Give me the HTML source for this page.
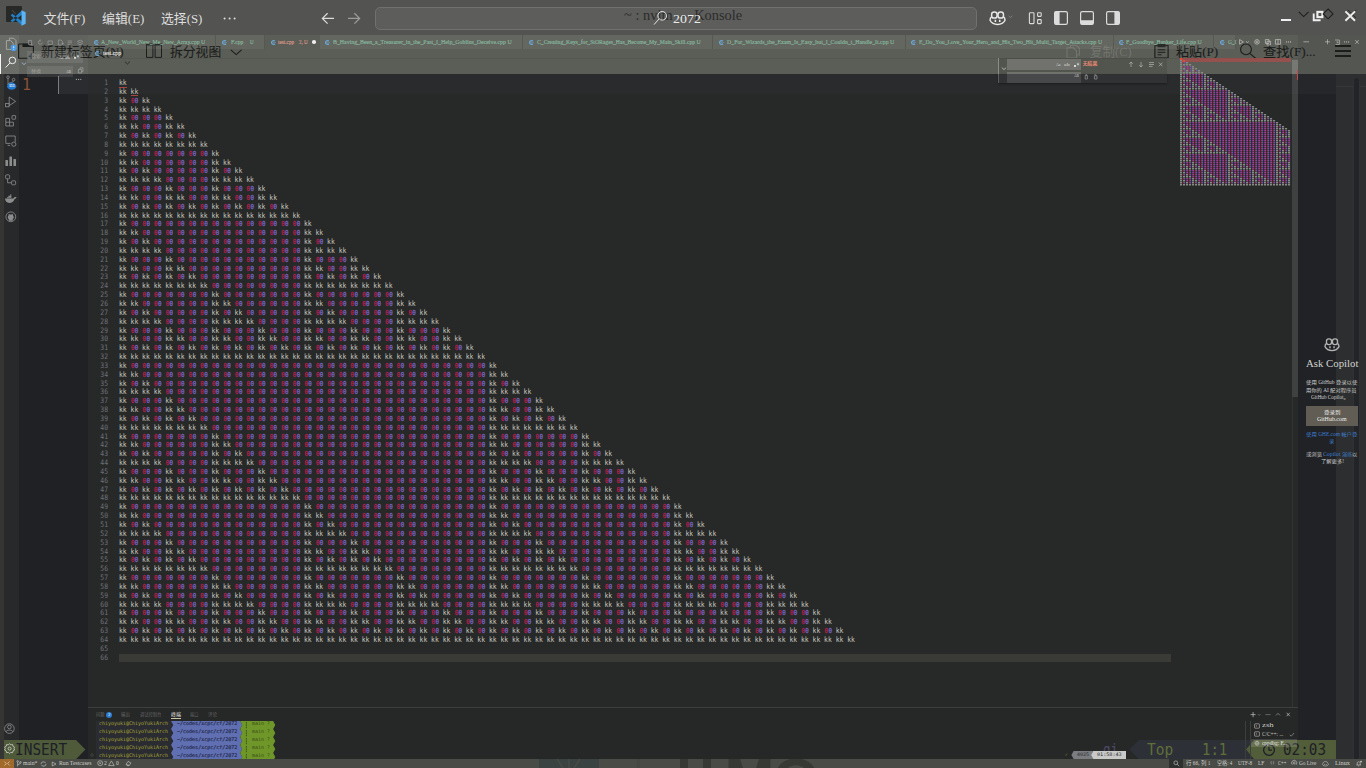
<!DOCTYPE html><html lang="zh-CN"><head><meta charset="utf-8"><title>test.cpp</title><style>
*{margin:0;padding:0;box-sizing:border-box}
html,body{width:1366px;height:768px;overflow:hidden;background:#272929}
body{position:relative;font-family:"Liberation Serif","Noto Sans CJK SC",serif}
div,span.t,svg{position:absolute}
svg{overflow:visible}
.t{white-space:pre;transform-origin:0 50%}
.fs{font-family:"Liberation Serif","Noto Sans CJK SC",serif}
.fn{font-family:"Liberation Sans","Noto Sans CJK SC",sans-serif}
.fm{font-family:"DejaVu Sans Mono","Liberation Mono","Noto Sans CJK SC",monospace}
#code,#ln{left:0;top:0;font-family:"DejaVu Sans Mono","Liberation Mono","Noto Sans CJK SC",monospace;font-size:7.5px;color:#c3c3bb;white-space:pre}
#code div{position:absolute;left:0;height:9px;line-height:9px;transform:scaleX(.8533);transform-origin:0 0}
#code i,#code b{font-style:normal;font-weight:400;font-size:6.8px;letter-spacing:.421px}#code i{margin-left:.5px;color:#bd214b;-webkit-text-stroke:.22px #bd214b}#code b{margin-right:-.5px;color:#7b6cd4;-webkit-text-stroke:.22px #7b6cd4}
#ln div{position:absolute;width:30px;text-align:right;height:9px;line-height:9px;transform:scaleX(.8533);transform-origin:100% 0;color:#6d7277}
</style></head><body>
<div style="left:0px;top:74px;width:4px;height:685px;background:#353533;"></div>
<div style="left:4px;top:74px;width:15px;height:685px;background:#27292a;"></div>
<div style="left:19px;top:74px;width:69px;height:685px;background:#1f2124;"></div>
<div style="left:1298px;top:74px;width:38px;height:685px;background:#202225;"></div>
<div style="left:1336px;top:74px;width:30px;height:685px;background:#2c2e2f;"></div>
<div style="left:58.5px;top:74px;width:29.5px;height:20px;background:#2a2c30;"></div>
<div style="left:88px;top:74px;width:1210px;height:20px;background:#292b2d;"></div>
<div style="left:1298px;top:74px;width:38px;height:20px;background:#25272a;"></div>
<div style="left:0px;top:0px;width:1366px;height:35px;background:#535351;"></div>
<div style="left:0px;top:35px;width:19px;height:39px;background:#6a6c67;"></div>
<div style="left:19px;top:35px;width:69px;height:39px;background:#61635e;"></div>
<div style="left:88px;top:35px;width:1210px;height:39px;background:#5b5d57;"></div>
<div style="left:1298px;top:35px;width:68px;height:39px;background:#545652;"></div>
<div style="left:0px;top:759px;width:1366px;height:9px;background:#494b46;"></div>
<div id="ln">
<div style="left:78px;top:78.00px">1</div>
<div style="left:78px;top:86.84px">2</div>
<div style="left:78px;top:95.68px">3</div>
<div style="left:78px;top:104.52px">4</div>
<div style="left:78px;top:113.36px">5</div>
<div style="left:78px;top:122.20px">6</div>
<div style="left:78px;top:131.04px">7</div>
<div style="left:78px;top:139.88px">8</div>
<div style="left:78px;top:148.72px">9</div>
<div style="left:78px;top:157.56px">10</div>
<div style="left:78px;top:166.40px">11</div>
<div style="left:78px;top:175.24px">12</div>
<div style="left:78px;top:184.08px">13</div>
<div style="left:78px;top:192.92px">14</div>
<div style="left:78px;top:201.76px">15</div>
<div style="left:78px;top:210.60px">16</div>
<div style="left:78px;top:219.44px">17</div>
<div style="left:78px;top:228.28px">18</div>
<div style="left:78px;top:237.12px">19</div>
<div style="left:78px;top:245.96px">20</div>
<div style="left:78px;top:254.80px">21</div>
<div style="left:78px;top:263.64px">22</div>
<div style="left:78px;top:272.48px">23</div>
<div style="left:78px;top:281.32px">24</div>
<div style="left:78px;top:290.16px">25</div>
<div style="left:78px;top:299.00px">26</div>
<div style="left:78px;top:307.84px">27</div>
<div style="left:78px;top:316.68px">28</div>
<div style="left:78px;top:325.52px">29</div>
<div style="left:78px;top:334.36px">30</div>
<div style="left:78px;top:343.20px">31</div>
<div style="left:78px;top:352.04px">32</div>
<div style="left:78px;top:360.88px">33</div>
<div style="left:78px;top:369.72px">34</div>
<div style="left:78px;top:378.56px">35</div>
<div style="left:78px;top:387.40px">36</div>
<div style="left:78px;top:396.24px">37</div>
<div style="left:78px;top:405.08px">38</div>
<div style="left:78px;top:413.92px">39</div>
<div style="left:78px;top:422.76px">40</div>
<div style="left:78px;top:431.60px">41</div>
<div style="left:78px;top:440.44px">42</div>
<div style="left:78px;top:449.28px">43</div>
<div style="left:78px;top:458.12px">44</div>
<div style="left:78px;top:466.96px">45</div>
<div style="left:78px;top:475.80px">46</div>
<div style="left:78px;top:484.64px">47</div>
<div style="left:78px;top:493.48px">48</div>
<div style="left:78px;top:502.32px">49</div>
<div style="left:78px;top:511.16px">50</div>
<div style="left:78px;top:520.00px">51</div>
<div style="left:78px;top:528.84px">52</div>
<div style="left:78px;top:537.68px">53</div>
<div style="left:78px;top:546.52px">54</div>
<div style="left:78px;top:555.36px">55</div>
<div style="left:78px;top:564.20px">56</div>
<div style="left:78px;top:573.04px">57</div>
<div style="left:78px;top:581.88px">58</div>
<div style="left:78px;top:590.72px">59</div>
<div style="left:78px;top:599.56px">60</div>
<div style="left:78px;top:608.40px">61</div>
<div style="left:78px;top:617.24px">62</div>
<div style="left:78px;top:626.08px">63</div>
<div style="left:78px;top:634.92px">64</div>
<div style="left:78px;top:643.76px">65</div>
<div style="left:78px;top:652.60px">66</div>
</div>
<div id="code">
<div style="left:118.8px;top:78.00px">kk</div>
<div style="left:118.8px;top:86.84px">kk kk</div>
<div style="left:118.8px;top:95.68px">kk <i>0</i><b>0</b> kk</div>
<div style="left:118.8px;top:104.52px">kk kk kk kk</div>
<div style="left:118.8px;top:113.36px">kk <i>0</i><b>0</b> <i>0</i><b>0</b> <i>0</i><b>0</b> kk</div>
<div style="left:118.8px;top:122.20px">kk kk <i>0</i><b>0</b> <i>0</i><b>0</b> kk kk</div>
<div style="left:118.8px;top:131.04px">kk <i>0</i><b>0</b> kk <i>0</i><b>0</b> kk <i>0</i><b>0</b> kk</div>
<div style="left:118.8px;top:139.88px">kk kk kk kk kk kk kk kk</div>
<div style="left:118.8px;top:148.72px">kk <i>0</i><b>0</b> <i>0</i><b>0</b> <i>0</i><b>0</b> <i>0</i><b>0</b> <i>0</i><b>0</b> <i>0</i><b>0</b> <i>0</i><b>0</b> kk</div>
<div style="left:118.8px;top:157.56px">kk kk <i>0</i><b>0</b> <i>0</i><b>0</b> <i>0</i><b>0</b> <i>0</i><b>0</b> <i>0</i><b>0</b> <i>0</i><b>0</b> kk kk</div>
<div style="left:118.8px;top:166.40px">kk <i>0</i><b>0</b> kk <i>0</i><b>0</b> <i>0</i><b>0</b> <i>0</i><b>0</b> <i>0</i><b>0</b> <i>0</i><b>0</b> kk <i>0</i><b>0</b> kk</div>
<div style="left:118.8px;top:175.24px">kk kk kk kk <i>0</i><b>0</b> <i>0</i><b>0</b> <i>0</i><b>0</b> <i>0</i><b>0</b> kk kk kk kk</div>
<div style="left:118.8px;top:184.08px">kk <i>0</i><b>0</b> <i>0</i><b>0</b> <i>0</i><b>0</b> kk <i>0</i><b>0</b> <i>0</i><b>0</b> <i>0</i><b>0</b> kk <i>0</i><b>0</b> <i>0</i><b>0</b> <i>0</i><b>0</b> kk</div>
<div style="left:118.8px;top:192.92px">kk kk <i>0</i><b>0</b> <i>0</i><b>0</b> kk kk <i>0</i><b>0</b> <i>0</i><b>0</b> kk kk <i>0</i><b>0</b> <i>0</i><b>0</b> kk kk</div>
<div style="left:118.8px;top:201.76px">kk <i>0</i><b>0</b> kk <i>0</i><b>0</b> kk <i>0</i><b>0</b> kk <i>0</i><b>0</b> kk <i>0</i><b>0</b> kk <i>0</i><b>0</b> kk <i>0</i><b>0</b> kk</div>
<div style="left:118.8px;top:210.60px">kk kk kk kk kk kk kk kk kk kk kk kk kk kk kk kk</div>
<div style="left:118.8px;top:219.44px">kk <i>0</i><b>0</b> <i>0</i><b>0</b> <i>0</i><b>0</b> <i>0</i><b>0</b> <i>0</i><b>0</b> <i>0</i><b>0</b> <i>0</i><b>0</b> <i>0</i><b>0</b> <i>0</i><b>0</b> <i>0</i><b>0</b> <i>0</i><b>0</b> <i>0</i><b>0</b> <i>0</i><b>0</b> <i>0</i><b>0</b> <i>0</i><b>0</b> kk</div>
<div style="left:118.8px;top:228.28px">kk kk <i>0</i><b>0</b> <i>0</i><b>0</b> <i>0</i><b>0</b> <i>0</i><b>0</b> <i>0</i><b>0</b> <i>0</i><b>0</b> <i>0</i><b>0</b> <i>0</i><b>0</b> <i>0</i><b>0</b> <i>0</i><b>0</b> <i>0</i><b>0</b> <i>0</i><b>0</b> <i>0</i><b>0</b> <i>0</i><b>0</b> kk kk</div>
<div style="left:118.8px;top:237.12px">kk <i>0</i><b>0</b> kk <i>0</i><b>0</b> <i>0</i><b>0</b> <i>0</i><b>0</b> <i>0</i><b>0</b> <i>0</i><b>0</b> <i>0</i><b>0</b> <i>0</i><b>0</b> <i>0</i><b>0</b> <i>0</i><b>0</b> <i>0</i><b>0</b> <i>0</i><b>0</b> <i>0</i><b>0</b> <i>0</i><b>0</b> kk <i>0</i><b>0</b> kk</div>
<div style="left:118.8px;top:245.96px">kk kk kk kk <i>0</i><b>0</b> <i>0</i><b>0</b> <i>0</i><b>0</b> <i>0</i><b>0</b> <i>0</i><b>0</b> <i>0</i><b>0</b> <i>0</i><b>0</b> <i>0</i><b>0</b> <i>0</i><b>0</b> <i>0</i><b>0</b> <i>0</i><b>0</b> <i>0</i><b>0</b> kk kk kk kk</div>
<div style="left:118.8px;top:254.80px">kk <i>0</i><b>0</b> <i>0</i><b>0</b> <i>0</i><b>0</b> kk <i>0</i><b>0</b> <i>0</i><b>0</b> <i>0</i><b>0</b> <i>0</i><b>0</b> <i>0</i><b>0</b> <i>0</i><b>0</b> <i>0</i><b>0</b> <i>0</i><b>0</b> <i>0</i><b>0</b> <i>0</i><b>0</b> <i>0</i><b>0</b> kk <i>0</i><b>0</b> <i>0</i><b>0</b> <i>0</i><b>0</b> kk</div>
<div style="left:118.8px;top:263.64px">kk kk <i>0</i><b>0</b> <i>0</i><b>0</b> kk kk <i>0</i><b>0</b> <i>0</i><b>0</b> <i>0</i><b>0</b> <i>0</i><b>0</b> <i>0</i><b>0</b> <i>0</i><b>0</b> <i>0</i><b>0</b> <i>0</i><b>0</b> <i>0</i><b>0</b> <i>0</i><b>0</b> kk kk <i>0</i><b>0</b> <i>0</i><b>0</b> kk kk</div>
<div style="left:118.8px;top:272.48px">kk <i>0</i><b>0</b> kk <i>0</i><b>0</b> kk <i>0</i><b>0</b> kk <i>0</i><b>0</b> <i>0</i><b>0</b> <i>0</i><b>0</b> <i>0</i><b>0</b> <i>0</i><b>0</b> <i>0</i><b>0</b> <i>0</i><b>0</b> <i>0</i><b>0</b> <i>0</i><b>0</b> kk <i>0</i><b>0</b> kk <i>0</i><b>0</b> kk <i>0</i><b>0</b> kk</div>
<div style="left:118.8px;top:281.32px">kk kk kk kk kk kk kk kk <i>0</i><b>0</b> <i>0</i><b>0</b> <i>0</i><b>0</b> <i>0</i><b>0</b> <i>0</i><b>0</b> <i>0</i><b>0</b> <i>0</i><b>0</b> <i>0</i><b>0</b> kk kk kk kk kk kk kk kk</div>
<div style="left:118.8px;top:290.16px">kk <i>0</i><b>0</b> <i>0</i><b>0</b> <i>0</i><b>0</b> <i>0</i><b>0</b> <i>0</i><b>0</b> <i>0</i><b>0</b> <i>0</i><b>0</b> kk <i>0</i><b>0</b> <i>0</i><b>0</b> <i>0</i><b>0</b> <i>0</i><b>0</b> <i>0</i><b>0</b> <i>0</i><b>0</b> <i>0</i><b>0</b> kk <i>0</i><b>0</b> <i>0</i><b>0</b> <i>0</i><b>0</b> <i>0</i><b>0</b> <i>0</i><b>0</b> <i>0</i><b>0</b> <i>0</i><b>0</b> kk</div>
<div style="left:118.8px;top:299.00px">kk kk <i>0</i><b>0</b> <i>0</i><b>0</b> <i>0</i><b>0</b> <i>0</i><b>0</b> <i>0</i><b>0</b> <i>0</i><b>0</b> kk kk <i>0</i><b>0</b> <i>0</i><b>0</b> <i>0</i><b>0</b> <i>0</i><b>0</b> <i>0</i><b>0</b> <i>0</i><b>0</b> kk kk <i>0</i><b>0</b> <i>0</i><b>0</b> <i>0</i><b>0</b> <i>0</i><b>0</b> <i>0</i><b>0</b> <i>0</i><b>0</b> kk kk</div>
<div style="left:118.8px;top:307.84px">kk <i>0</i><b>0</b> kk <i>0</i><b>0</b> <i>0</i><b>0</b> <i>0</i><b>0</b> <i>0</i><b>0</b> <i>0</i><b>0</b> kk <i>0</i><b>0</b> kk <i>0</i><b>0</b> <i>0</i><b>0</b> <i>0</i><b>0</b> <i>0</i><b>0</b> <i>0</i><b>0</b> kk <i>0</i><b>0</b> kk <i>0</i><b>0</b> <i>0</i><b>0</b> <i>0</i><b>0</b> <i>0</i><b>0</b> <i>0</i><b>0</b> kk <i>0</i><b>0</b> kk</div>
<div style="left:118.8px;top:316.68px">kk kk kk kk <i>0</i><b>0</b> <i>0</i><b>0</b> <i>0</i><b>0</b> <i>0</i><b>0</b> kk kk kk kk <i>0</i><b>0</b> <i>0</i><b>0</b> <i>0</i><b>0</b> <i>0</i><b>0</b> kk kk kk kk <i>0</i><b>0</b> <i>0</i><b>0</b> <i>0</i><b>0</b> <i>0</i><b>0</b> kk kk kk kk</div>
<div style="left:118.8px;top:325.52px">kk <i>0</i><b>0</b> <i>0</i><b>0</b> <i>0</i><b>0</b> kk <i>0</i><b>0</b> <i>0</i><b>0</b> <i>0</i><b>0</b> kk <i>0</i><b>0</b> <i>0</i><b>0</b> <i>0</i><b>0</b> kk <i>0</i><b>0</b> <i>0</i><b>0</b> <i>0</i><b>0</b> kk <i>0</i><b>0</b> <i>0</i><b>0</b> <i>0</i><b>0</b> kk <i>0</i><b>0</b> <i>0</i><b>0</b> <i>0</i><b>0</b> kk <i>0</i><b>0</b> <i>0</i><b>0</b> <i>0</i><b>0</b> kk</div>
<div style="left:118.8px;top:334.36px">kk kk <i>0</i><b>0</b> <i>0</i><b>0</b> kk kk <i>0</i><b>0</b> <i>0</i><b>0</b> kk kk <i>0</i><b>0</b> <i>0</i><b>0</b> kk kk <i>0</i><b>0</b> <i>0</i><b>0</b> kk kk <i>0</i><b>0</b> <i>0</i><b>0</b> kk kk <i>0</i><b>0</b> <i>0</i><b>0</b> kk kk <i>0</i><b>0</b> <i>0</i><b>0</b> kk kk</div>
<div style="left:118.8px;top:343.20px">kk <i>0</i><b>0</b> kk <i>0</i><b>0</b> kk <i>0</i><b>0</b> kk <i>0</i><b>0</b> kk <i>0</i><b>0</b> kk <i>0</i><b>0</b> kk <i>0</i><b>0</b> kk <i>0</i><b>0</b> kk <i>0</i><b>0</b> kk <i>0</i><b>0</b> kk <i>0</i><b>0</b> kk <i>0</i><b>0</b> kk <i>0</i><b>0</b> kk <i>0</i><b>0</b> kk <i>0</i><b>0</b> kk</div>
<div style="left:118.8px;top:352.04px">kk kk kk kk kk kk kk kk kk kk kk kk kk kk kk kk kk kk kk kk kk kk kk kk kk kk kk kk kk kk kk kk</div>
<div style="left:118.8px;top:360.88px">kk <i>0</i><b>0</b> <i>0</i><b>0</b> <i>0</i><b>0</b> <i>0</i><b>0</b> <i>0</i><b>0</b> <i>0</i><b>0</b> <i>0</i><b>0</b> <i>0</i><b>0</b> <i>0</i><b>0</b> <i>0</i><b>0</b> <i>0</i><b>0</b> <i>0</i><b>0</b> <i>0</i><b>0</b> <i>0</i><b>0</b> <i>0</i><b>0</b> <i>0</i><b>0</b> <i>0</i><b>0</b> <i>0</i><b>0</b> <i>0</i><b>0</b> <i>0</i><b>0</b> <i>0</i><b>0</b> <i>0</i><b>0</b> <i>0</i><b>0</b> <i>0</i><b>0</b> <i>0</i><b>0</b> <i>0</i><b>0</b> <i>0</i><b>0</b> <i>0</i><b>0</b> <i>0</i><b>0</b> <i>0</i><b>0</b> <i>0</i><b>0</b> kk</div>
<div style="left:118.8px;top:369.72px">kk kk <i>0</i><b>0</b> <i>0</i><b>0</b> <i>0</i><b>0</b> <i>0</i><b>0</b> <i>0</i><b>0</b> <i>0</i><b>0</b> <i>0</i><b>0</b> <i>0</i><b>0</b> <i>0</i><b>0</b> <i>0</i><b>0</b> <i>0</i><b>0</b> <i>0</i><b>0</b> <i>0</i><b>0</b> <i>0</i><b>0</b> <i>0</i><b>0</b> <i>0</i><b>0</b> <i>0</i><b>0</b> <i>0</i><b>0</b> <i>0</i><b>0</b> <i>0</i><b>0</b> <i>0</i><b>0</b> <i>0</i><b>0</b> <i>0</i><b>0</b> <i>0</i><b>0</b> <i>0</i><b>0</b> <i>0</i><b>0</b> <i>0</i><b>0</b> <i>0</i><b>0</b> <i>0</i><b>0</b> <i>0</i><b>0</b> kk kk</div>
<div style="left:118.8px;top:378.56px">kk <i>0</i><b>0</b> kk <i>0</i><b>0</b> <i>0</i><b>0</b> <i>0</i><b>0</b> <i>0</i><b>0</b> <i>0</i><b>0</b> <i>0</i><b>0</b> <i>0</i><b>0</b> <i>0</i><b>0</b> <i>0</i><b>0</b> <i>0</i><b>0</b> <i>0</i><b>0</b> <i>0</i><b>0</b> <i>0</i><b>0</b> <i>0</i><b>0</b> <i>0</i><b>0</b> <i>0</i><b>0</b> <i>0</i><b>0</b> <i>0</i><b>0</b> <i>0</i><b>0</b> <i>0</i><b>0</b> <i>0</i><b>0</b> <i>0</i><b>0</b> <i>0</i><b>0</b> <i>0</i><b>0</b> <i>0</i><b>0</b> <i>0</i><b>0</b> <i>0</i><b>0</b> <i>0</i><b>0</b> <i>0</i><b>0</b> kk <i>0</i><b>0</b> kk</div>
<div style="left:118.8px;top:387.40px">kk kk kk kk <i>0</i><b>0</b> <i>0</i><b>0</b> <i>0</i><b>0</b> <i>0</i><b>0</b> <i>0</i><b>0</b> <i>0</i><b>0</b> <i>0</i><b>0</b> <i>0</i><b>0</b> <i>0</i><b>0</b> <i>0</i><b>0</b> <i>0</i><b>0</b> <i>0</i><b>0</b> <i>0</i><b>0</b> <i>0</i><b>0</b> <i>0</i><b>0</b> <i>0</i><b>0</b> <i>0</i><b>0</b> <i>0</i><b>0</b> <i>0</i><b>0</b> <i>0</i><b>0</b> <i>0</i><b>0</b> <i>0</i><b>0</b> <i>0</i><b>0</b> <i>0</i><b>0</b> <i>0</i><b>0</b> <i>0</i><b>0</b> <i>0</i><b>0</b> <i>0</i><b>0</b> kk kk kk kk</div>
<div style="left:118.8px;top:396.24px">kk <i>0</i><b>0</b> <i>0</i><b>0</b> <i>0</i><b>0</b> kk <i>0</i><b>0</b> <i>0</i><b>0</b> <i>0</i><b>0</b> <i>0</i><b>0</b> <i>0</i><b>0</b> <i>0</i><b>0</b> <i>0</i><b>0</b> <i>0</i><b>0</b> <i>0</i><b>0</b> <i>0</i><b>0</b> <i>0</i><b>0</b> <i>0</i><b>0</b> <i>0</i><b>0</b> <i>0</i><b>0</b> <i>0</i><b>0</b> <i>0</i><b>0</b> <i>0</i><b>0</b> <i>0</i><b>0</b> <i>0</i><b>0</b> <i>0</i><b>0</b> <i>0</i><b>0</b> <i>0</i><b>0</b> <i>0</i><b>0</b> <i>0</i><b>0</b> <i>0</i><b>0</b> <i>0</i><b>0</b> <i>0</i><b>0</b> kk <i>0</i><b>0</b> <i>0</i><b>0</b> <i>0</i><b>0</b> kk</div>
<div style="left:118.8px;top:405.08px">kk kk <i>0</i><b>0</b> <i>0</i><b>0</b> kk kk <i>0</i><b>0</b> <i>0</i><b>0</b> <i>0</i><b>0</b> <i>0</i><b>0</b> <i>0</i><b>0</b> <i>0</i><b>0</b> <i>0</i><b>0</b> <i>0</i><b>0</b> <i>0</i><b>0</b> <i>0</i><b>0</b> <i>0</i><b>0</b> <i>0</i><b>0</b> <i>0</i><b>0</b> <i>0</i><b>0</b> <i>0</i><b>0</b> <i>0</i><b>0</b> <i>0</i><b>0</b> <i>0</i><b>0</b> <i>0</i><b>0</b> <i>0</i><b>0</b> <i>0</i><b>0</b> <i>0</i><b>0</b> <i>0</i><b>0</b> <i>0</i><b>0</b> <i>0</i><b>0</b> <i>0</i><b>0</b> kk kk <i>0</i><b>0</b> <i>0</i><b>0</b> kk kk</div>
<div style="left:118.8px;top:413.92px">kk <i>0</i><b>0</b> kk <i>0</i><b>0</b> kk <i>0</i><b>0</b> kk <i>0</i><b>0</b> <i>0</i><b>0</b> <i>0</i><b>0</b> <i>0</i><b>0</b> <i>0</i><b>0</b> <i>0</i><b>0</b> <i>0</i><b>0</b> <i>0</i><b>0</b> <i>0</i><b>0</b> <i>0</i><b>0</b> <i>0</i><b>0</b> <i>0</i><b>0</b> <i>0</i><b>0</b> <i>0</i><b>0</b> <i>0</i><b>0</b> <i>0</i><b>0</b> <i>0</i><b>0</b> <i>0</i><b>0</b> <i>0</i><b>0</b> <i>0</i><b>0</b> <i>0</i><b>0</b> <i>0</i><b>0</b> <i>0</i><b>0</b> <i>0</i><b>0</b> <i>0</i><b>0</b> kk <i>0</i><b>0</b> kk <i>0</i><b>0</b> kk <i>0</i><b>0</b> kk</div>
<div style="left:118.8px;top:422.76px">kk kk kk kk kk kk kk kk <i>0</i><b>0</b> <i>0</i><b>0</b> <i>0</i><b>0</b> <i>0</i><b>0</b> <i>0</i><b>0</b> <i>0</i><b>0</b> <i>0</i><b>0</b> <i>0</i><b>0</b> <i>0</i><b>0</b> <i>0</i><b>0</b> <i>0</i><b>0</b> <i>0</i><b>0</b> <i>0</i><b>0</b> <i>0</i><b>0</b> <i>0</i><b>0</b> <i>0</i><b>0</b> <i>0</i><b>0</b> <i>0</i><b>0</b> <i>0</i><b>0</b> <i>0</i><b>0</b> <i>0</i><b>0</b> <i>0</i><b>0</b> <i>0</i><b>0</b> <i>0</i><b>0</b> kk kk kk kk kk kk kk kk</div>
<div style="left:118.8px;top:431.60px">kk <i>0</i><b>0</b> <i>0</i><b>0</b> <i>0</i><b>0</b> <i>0</i><b>0</b> <i>0</i><b>0</b> <i>0</i><b>0</b> <i>0</i><b>0</b> kk <i>0</i><b>0</b> <i>0</i><b>0</b> <i>0</i><b>0</b> <i>0</i><b>0</b> <i>0</i><b>0</b> <i>0</i><b>0</b> <i>0</i><b>0</b> <i>0</i><b>0</b> <i>0</i><b>0</b> <i>0</i><b>0</b> <i>0</i><b>0</b> <i>0</i><b>0</b> <i>0</i><b>0</b> <i>0</i><b>0</b> <i>0</i><b>0</b> <i>0</i><b>0</b> <i>0</i><b>0</b> <i>0</i><b>0</b> <i>0</i><b>0</b> <i>0</i><b>0</b> <i>0</i><b>0</b> <i>0</i><b>0</b> <i>0</i><b>0</b> kk <i>0</i><b>0</b> <i>0</i><b>0</b> <i>0</i><b>0</b> <i>0</i><b>0</b> <i>0</i><b>0</b> <i>0</i><b>0</b> <i>0</i><b>0</b> kk</div>
<div style="left:118.8px;top:440.44px">kk kk <i>0</i><b>0</b> <i>0</i><b>0</b> <i>0</i><b>0</b> <i>0</i><b>0</b> <i>0</i><b>0</b> <i>0</i><b>0</b> kk kk <i>0</i><b>0</b> <i>0</i><b>0</b> <i>0</i><b>0</b> <i>0</i><b>0</b> <i>0</i><b>0</b> <i>0</i><b>0</b> <i>0</i><b>0</b> <i>0</i><b>0</b> <i>0</i><b>0</b> <i>0</i><b>0</b> <i>0</i><b>0</b> <i>0</i><b>0</b> <i>0</i><b>0</b> <i>0</i><b>0</b> <i>0</i><b>0</b> <i>0</i><b>0</b> <i>0</i><b>0</b> <i>0</i><b>0</b> <i>0</i><b>0</b> <i>0</i><b>0</b> <i>0</i><b>0</b> <i>0</i><b>0</b> kk kk <i>0</i><b>0</b> <i>0</i><b>0</b> <i>0</i><b>0</b> <i>0</i><b>0</b> <i>0</i><b>0</b> <i>0</i><b>0</b> kk kk</div>
<div style="left:118.8px;top:449.28px">kk <i>0</i><b>0</b> kk <i>0</i><b>0</b> <i>0</i><b>0</b> <i>0</i><b>0</b> <i>0</i><b>0</b> <i>0</i><b>0</b> kk <i>0</i><b>0</b> kk <i>0</i><b>0</b> <i>0</i><b>0</b> <i>0</i><b>0</b> <i>0</i><b>0</b> <i>0</i><b>0</b> <i>0</i><b>0</b> <i>0</i><b>0</b> <i>0</i><b>0</b> <i>0</i><b>0</b> <i>0</i><b>0</b> <i>0</i><b>0</b> <i>0</i><b>0</b> <i>0</i><b>0</b> <i>0</i><b>0</b> <i>0</i><b>0</b> <i>0</i><b>0</b> <i>0</i><b>0</b> <i>0</i><b>0</b> <i>0</i><b>0</b> <i>0</i><b>0</b> <i>0</i><b>0</b> kk <i>0</i><b>0</b> kk <i>0</i><b>0</b> <i>0</i><b>0</b> <i>0</i><b>0</b> <i>0</i><b>0</b> <i>0</i><b>0</b> kk <i>0</i><b>0</b> kk</div>
<div style="left:118.8px;top:458.12px">kk kk kk kk <i>0</i><b>0</b> <i>0</i><b>0</b> <i>0</i><b>0</b> <i>0</i><b>0</b> kk kk kk kk <i>0</i><b>0</b> <i>0</i><b>0</b> <i>0</i><b>0</b> <i>0</i><b>0</b> <i>0</i><b>0</b> <i>0</i><b>0</b> <i>0</i><b>0</b> <i>0</i><b>0</b> <i>0</i><b>0</b> <i>0</i><b>0</b> <i>0</i><b>0</b> <i>0</i><b>0</b> <i>0</i><b>0</b> <i>0</i><b>0</b> <i>0</i><b>0</b> <i>0</i><b>0</b> <i>0</i><b>0</b> <i>0</i><b>0</b> <i>0</i><b>0</b> <i>0</i><b>0</b> kk kk kk kk <i>0</i><b>0</b> <i>0</i><b>0</b> <i>0</i><b>0</b> <i>0</i><b>0</b> kk kk kk kk</div>
<div style="left:118.8px;top:466.96px">kk <i>0</i><b>0</b> <i>0</i><b>0</b> <i>0</i><b>0</b> kk <i>0</i><b>0</b> <i>0</i><b>0</b> <i>0</i><b>0</b> kk <i>0</i><b>0</b> <i>0</i><b>0</b> <i>0</i><b>0</b> kk <i>0</i><b>0</b> <i>0</i><b>0</b> <i>0</i><b>0</b> <i>0</i><b>0</b> <i>0</i><b>0</b> <i>0</i><b>0</b> <i>0</i><b>0</b> <i>0</i><b>0</b> <i>0</i><b>0</b> <i>0</i><b>0</b> <i>0</i><b>0</b> <i>0</i><b>0</b> <i>0</i><b>0</b> <i>0</i><b>0</b> <i>0</i><b>0</b> <i>0</i><b>0</b> <i>0</i><b>0</b> <i>0</i><b>0</b> <i>0</i><b>0</b> kk <i>0</i><b>0</b> <i>0</i><b>0</b> <i>0</i><b>0</b> kk <i>0</i><b>0</b> <i>0</i><b>0</b> <i>0</i><b>0</b> kk <i>0</i><b>0</b> <i>0</i><b>0</b> <i>0</i><b>0</b> kk</div>
<div style="left:118.8px;top:475.80px">kk kk <i>0</i><b>0</b> <i>0</i><b>0</b> kk kk <i>0</i><b>0</b> <i>0</i><b>0</b> kk kk <i>0</i><b>0</b> <i>0</i><b>0</b> kk kk <i>0</i><b>0</b> <i>0</i><b>0</b> <i>0</i><b>0</b> <i>0</i><b>0</b> <i>0</i><b>0</b> <i>0</i><b>0</b> <i>0</i><b>0</b> <i>0</i><b>0</b> <i>0</i><b>0</b> <i>0</i><b>0</b> <i>0</i><b>0</b> <i>0</i><b>0</b> <i>0</i><b>0</b> <i>0</i><b>0</b> <i>0</i><b>0</b> <i>0</i><b>0</b> <i>0</i><b>0</b> <i>0</i><b>0</b> kk kk <i>0</i><b>0</b> <i>0</i><b>0</b> kk kk <i>0</i><b>0</b> <i>0</i><b>0</b> kk kk <i>0</i><b>0</b> <i>0</i><b>0</b> kk kk</div>
<div style="left:118.8px;top:484.64px">kk <i>0</i><b>0</b> kk <i>0</i><b>0</b> kk <i>0</i><b>0</b> kk <i>0</i><b>0</b> kk <i>0</i><b>0</b> kk <i>0</i><b>0</b> kk <i>0</i><b>0</b> kk <i>0</i><b>0</b> <i>0</i><b>0</b> <i>0</i><b>0</b> <i>0</i><b>0</b> <i>0</i><b>0</b> <i>0</i><b>0</b> <i>0</i><b>0</b> <i>0</i><b>0</b> <i>0</i><b>0</b> <i>0</i><b>0</b> <i>0</i><b>0</b> <i>0</i><b>0</b> <i>0</i><b>0</b> <i>0</i><b>0</b> <i>0</i><b>0</b> <i>0</i><b>0</b> <i>0</i><b>0</b> kk <i>0</i><b>0</b> kk <i>0</i><b>0</b> kk <i>0</i><b>0</b> kk <i>0</i><b>0</b> kk <i>0</i><b>0</b> kk <i>0</i><b>0</b> kk <i>0</i><b>0</b> kk</div>
<div style="left:118.8px;top:493.48px">kk kk kk kk kk kk kk kk kk kk kk kk kk kk kk kk <i>0</i><b>0</b> <i>0</i><b>0</b> <i>0</i><b>0</b> <i>0</i><b>0</b> <i>0</i><b>0</b> <i>0</i><b>0</b> <i>0</i><b>0</b> <i>0</i><b>0</b> <i>0</i><b>0</b> <i>0</i><b>0</b> <i>0</i><b>0</b> <i>0</i><b>0</b> <i>0</i><b>0</b> <i>0</i><b>0</b> <i>0</i><b>0</b> <i>0</i><b>0</b> kk kk kk kk kk kk kk kk kk kk kk kk kk kk kk kk</div>
<div style="left:118.8px;top:502.32px">kk <i>0</i><b>0</b> <i>0</i><b>0</b> <i>0</i><b>0</b> <i>0</i><b>0</b> <i>0</i><b>0</b> <i>0</i><b>0</b> <i>0</i><b>0</b> <i>0</i><b>0</b> <i>0</i><b>0</b> <i>0</i><b>0</b> <i>0</i><b>0</b> <i>0</i><b>0</b> <i>0</i><b>0</b> <i>0</i><b>0</b> <i>0</i><b>0</b> kk <i>0</i><b>0</b> <i>0</i><b>0</b> <i>0</i><b>0</b> <i>0</i><b>0</b> <i>0</i><b>0</b> <i>0</i><b>0</b> <i>0</i><b>0</b> <i>0</i><b>0</b> <i>0</i><b>0</b> <i>0</i><b>0</b> <i>0</i><b>0</b> <i>0</i><b>0</b> <i>0</i><b>0</b> <i>0</i><b>0</b> <i>0</i><b>0</b> kk <i>0</i><b>0</b> <i>0</i><b>0</b> <i>0</i><b>0</b> <i>0</i><b>0</b> <i>0</i><b>0</b> <i>0</i><b>0</b> <i>0</i><b>0</b> <i>0</i><b>0</b> <i>0</i><b>0</b> <i>0</i><b>0</b> <i>0</i><b>0</b> <i>0</i><b>0</b> <i>0</i><b>0</b> <i>0</i><b>0</b> <i>0</i><b>0</b> kk</div>
<div style="left:118.8px;top:511.16px">kk kk <i>0</i><b>0</b> <i>0</i><b>0</b> <i>0</i><b>0</b> <i>0</i><b>0</b> <i>0</i><b>0</b> <i>0</i><b>0</b> <i>0</i><b>0</b> <i>0</i><b>0</b> <i>0</i><b>0</b> <i>0</i><b>0</b> <i>0</i><b>0</b> <i>0</i><b>0</b> <i>0</i><b>0</b> <i>0</i><b>0</b> kk kk <i>0</i><b>0</b> <i>0</i><b>0</b> <i>0</i><b>0</b> <i>0</i><b>0</b> <i>0</i><b>0</b> <i>0</i><b>0</b> <i>0</i><b>0</b> <i>0</i><b>0</b> <i>0</i><b>0</b> <i>0</i><b>0</b> <i>0</i><b>0</b> <i>0</i><b>0</b> <i>0</i><b>0</b> <i>0</i><b>0</b> kk kk <i>0</i><b>0</b> <i>0</i><b>0</b> <i>0</i><b>0</b> <i>0</i><b>0</b> <i>0</i><b>0</b> <i>0</i><b>0</b> <i>0</i><b>0</b> <i>0</i><b>0</b> <i>0</i><b>0</b> <i>0</i><b>0</b> <i>0</i><b>0</b> <i>0</i><b>0</b> <i>0</i><b>0</b> <i>0</i><b>0</b> kk kk</div>
<div style="left:118.8px;top:520.00px">kk <i>0</i><b>0</b> kk <i>0</i><b>0</b> <i>0</i><b>0</b> <i>0</i><b>0</b> <i>0</i><b>0</b> <i>0</i><b>0</b> <i>0</i><b>0</b> <i>0</i><b>0</b> <i>0</i><b>0</b> <i>0</i><b>0</b> <i>0</i><b>0</b> <i>0</i><b>0</b> <i>0</i><b>0</b> <i>0</i><b>0</b> kk <i>0</i><b>0</b> kk <i>0</i><b>0</b> <i>0</i><b>0</b> <i>0</i><b>0</b> <i>0</i><b>0</b> <i>0</i><b>0</b> <i>0</i><b>0</b> <i>0</i><b>0</b> <i>0</i><b>0</b> <i>0</i><b>0</b> <i>0</i><b>0</b> <i>0</i><b>0</b> <i>0</i><b>0</b> <i>0</i><b>0</b> kk <i>0</i><b>0</b> kk <i>0</i><b>0</b> <i>0</i><b>0</b> <i>0</i><b>0</b> <i>0</i><b>0</b> <i>0</i><b>0</b> <i>0</i><b>0</b> <i>0</i><b>0</b> <i>0</i><b>0</b> <i>0</i><b>0</b> <i>0</i><b>0</b> <i>0</i><b>0</b> <i>0</i><b>0</b> <i>0</i><b>0</b> kk <i>0</i><b>0</b> kk</div>
<div style="left:118.8px;top:528.84px">kk kk kk kk <i>0</i><b>0</b> <i>0</i><b>0</b> <i>0</i><b>0</b> <i>0</i><b>0</b> <i>0</i><b>0</b> <i>0</i><b>0</b> <i>0</i><b>0</b> <i>0</i><b>0</b> <i>0</i><b>0</b> <i>0</i><b>0</b> <i>0</i><b>0</b> <i>0</i><b>0</b> kk kk kk kk <i>0</i><b>0</b> <i>0</i><b>0</b> <i>0</i><b>0</b> <i>0</i><b>0</b> <i>0</i><b>0</b> <i>0</i><b>0</b> <i>0</i><b>0</b> <i>0</i><b>0</b> <i>0</i><b>0</b> <i>0</i><b>0</b> <i>0</i><b>0</b> <i>0</i><b>0</b> kk kk kk kk <i>0</i><b>0</b> <i>0</i><b>0</b> <i>0</i><b>0</b> <i>0</i><b>0</b> <i>0</i><b>0</b> <i>0</i><b>0</b> <i>0</i><b>0</b> <i>0</i><b>0</b> <i>0</i><b>0</b> <i>0</i><b>0</b> <i>0</i><b>0</b> <i>0</i><b>0</b> kk kk kk kk</div>
<div style="left:118.8px;top:537.68px">kk <i>0</i><b>0</b> <i>0</i><b>0</b> <i>0</i><b>0</b> kk <i>0</i><b>0</b> <i>0</i><b>0</b> <i>0</i><b>0</b> <i>0</i><b>0</b> <i>0</i><b>0</b> <i>0</i><b>0</b> <i>0</i><b>0</b> <i>0</i><b>0</b> <i>0</i><b>0</b> <i>0</i><b>0</b> <i>0</i><b>0</b> kk <i>0</i><b>0</b> <i>0</i><b>0</b> <i>0</i><b>0</b> kk <i>0</i><b>0</b> <i>0</i><b>0</b> <i>0</i><b>0</b> <i>0</i><b>0</b> <i>0</i><b>0</b> <i>0</i><b>0</b> <i>0</i><b>0</b> <i>0</i><b>0</b> <i>0</i><b>0</b> <i>0</i><b>0</b> <i>0</i><b>0</b> kk <i>0</i><b>0</b> <i>0</i><b>0</b> <i>0</i><b>0</b> kk <i>0</i><b>0</b> <i>0</i><b>0</b> <i>0</i><b>0</b> <i>0</i><b>0</b> <i>0</i><b>0</b> <i>0</i><b>0</b> <i>0</i><b>0</b> <i>0</i><b>0</b> <i>0</i><b>0</b> <i>0</i><b>0</b> <i>0</i><b>0</b> kk <i>0</i><b>0</b> <i>0</i><b>0</b> <i>0</i><b>0</b> kk</div>
<div style="left:118.8px;top:546.52px">kk kk <i>0</i><b>0</b> <i>0</i><b>0</b> kk kk <i>0</i><b>0</b> <i>0</i><b>0</b> <i>0</i><b>0</b> <i>0</i><b>0</b> <i>0</i><b>0</b> <i>0</i><b>0</b> <i>0</i><b>0</b> <i>0</i><b>0</b> <i>0</i><b>0</b> <i>0</i><b>0</b> kk kk <i>0</i><b>0</b> <i>0</i><b>0</b> kk kk <i>0</i><b>0</b> <i>0</i><b>0</b> <i>0</i><b>0</b> <i>0</i><b>0</b> <i>0</i><b>0</b> <i>0</i><b>0</b> <i>0</i><b>0</b> <i>0</i><b>0</b> <i>0</i><b>0</b> <i>0</i><b>0</b> kk kk <i>0</i><b>0</b> <i>0</i><b>0</b> kk kk <i>0</i><b>0</b> <i>0</i><b>0</b> <i>0</i><b>0</b> <i>0</i><b>0</b> <i>0</i><b>0</b> <i>0</i><b>0</b> <i>0</i><b>0</b> <i>0</i><b>0</b> <i>0</i><b>0</b> <i>0</i><b>0</b> kk kk <i>0</i><b>0</b> <i>0</i><b>0</b> kk kk</div>
<div style="left:118.8px;top:555.36px">kk <i>0</i><b>0</b> kk <i>0</i><b>0</b> kk <i>0</i><b>0</b> kk <i>0</i><b>0</b> <i>0</i><b>0</b> <i>0</i><b>0</b> <i>0</i><b>0</b> <i>0</i><b>0</b> <i>0</i><b>0</b> <i>0</i><b>0</b> <i>0</i><b>0</b> <i>0</i><b>0</b> kk <i>0</i><b>0</b> kk <i>0</i><b>0</b> kk <i>0</i><b>0</b> kk <i>0</i><b>0</b> <i>0</i><b>0</b> <i>0</i><b>0</b> <i>0</i><b>0</b> <i>0</i><b>0</b> <i>0</i><b>0</b> <i>0</i><b>0</b> <i>0</i><b>0</b> <i>0</i><b>0</b> kk <i>0</i><b>0</b> kk <i>0</i><b>0</b> kk <i>0</i><b>0</b> kk <i>0</i><b>0</b> <i>0</i><b>0</b> <i>0</i><b>0</b> <i>0</i><b>0</b> <i>0</i><b>0</b> <i>0</i><b>0</b> <i>0</i><b>0</b> <i>0</i><b>0</b> <i>0</i><b>0</b> kk <i>0</i><b>0</b> kk <i>0</i><b>0</b> kk <i>0</i><b>0</b> kk</div>
<div style="left:118.8px;top:564.20px">kk kk kk kk kk kk kk kk <i>0</i><b>0</b> <i>0</i><b>0</b> <i>0</i><b>0</b> <i>0</i><b>0</b> <i>0</i><b>0</b> <i>0</i><b>0</b> <i>0</i><b>0</b> <i>0</i><b>0</b> kk kk kk kk kk kk kk kk <i>0</i><b>0</b> <i>0</i><b>0</b> <i>0</i><b>0</b> <i>0</i><b>0</b> <i>0</i><b>0</b> <i>0</i><b>0</b> <i>0</i><b>0</b> <i>0</i><b>0</b> kk kk kk kk kk kk kk kk <i>0</i><b>0</b> <i>0</i><b>0</b> <i>0</i><b>0</b> <i>0</i><b>0</b> <i>0</i><b>0</b> <i>0</i><b>0</b> <i>0</i><b>0</b> <i>0</i><b>0</b> kk kk kk kk kk kk kk kk</div>
<div style="left:118.8px;top:573.04px">kk <i>0</i><b>0</b> <i>0</i><b>0</b> <i>0</i><b>0</b> <i>0</i><b>0</b> <i>0</i><b>0</b> <i>0</i><b>0</b> <i>0</i><b>0</b> kk <i>0</i><b>0</b> <i>0</i><b>0</b> <i>0</i><b>0</b> <i>0</i><b>0</b> <i>0</i><b>0</b> <i>0</i><b>0</b> <i>0</i><b>0</b> kk <i>0</i><b>0</b> <i>0</i><b>0</b> <i>0</i><b>0</b> <i>0</i><b>0</b> <i>0</i><b>0</b> <i>0</i><b>0</b> <i>0</i><b>0</b> kk <i>0</i><b>0</b> <i>0</i><b>0</b> <i>0</i><b>0</b> <i>0</i><b>0</b> <i>0</i><b>0</b> <i>0</i><b>0</b> <i>0</i><b>0</b> kk <i>0</i><b>0</b> <i>0</i><b>0</b> <i>0</i><b>0</b> <i>0</i><b>0</b> <i>0</i><b>0</b> <i>0</i><b>0</b> <i>0</i><b>0</b> kk <i>0</i><b>0</b> <i>0</i><b>0</b> <i>0</i><b>0</b> <i>0</i><b>0</b> <i>0</i><b>0</b> <i>0</i><b>0</b> <i>0</i><b>0</b> kk <i>0</i><b>0</b> <i>0</i><b>0</b> <i>0</i><b>0</b> <i>0</i><b>0</b> <i>0</i><b>0</b> <i>0</i><b>0</b> <i>0</i><b>0</b> kk</div>
<div style="left:118.8px;top:581.88px">kk kk <i>0</i><b>0</b> <i>0</i><b>0</b> <i>0</i><b>0</b> <i>0</i><b>0</b> <i>0</i><b>0</b> <i>0</i><b>0</b> kk kk <i>0</i><b>0</b> <i>0</i><b>0</b> <i>0</i><b>0</b> <i>0</i><b>0</b> <i>0</i><b>0</b> <i>0</i><b>0</b> kk kk <i>0</i><b>0</b> <i>0</i><b>0</b> <i>0</i><b>0</b> <i>0</i><b>0</b> <i>0</i><b>0</b> <i>0</i><b>0</b> kk kk <i>0</i><b>0</b> <i>0</i><b>0</b> <i>0</i><b>0</b> <i>0</i><b>0</b> <i>0</i><b>0</b> <i>0</i><b>0</b> kk kk <i>0</i><b>0</b> <i>0</i><b>0</b> <i>0</i><b>0</b> <i>0</i><b>0</b> <i>0</i><b>0</b> <i>0</i><b>0</b> kk kk <i>0</i><b>0</b> <i>0</i><b>0</b> <i>0</i><b>0</b> <i>0</i><b>0</b> <i>0</i><b>0</b> <i>0</i><b>0</b> kk kk <i>0</i><b>0</b> <i>0</i><b>0</b> <i>0</i><b>0</b> <i>0</i><b>0</b> <i>0</i><b>0</b> <i>0</i><b>0</b> kk kk</div>
<div style="left:118.8px;top:590.72px">kk <i>0</i><b>0</b> kk <i>0</i><b>0</b> <i>0</i><b>0</b> <i>0</i><b>0</b> <i>0</i><b>0</b> <i>0</i><b>0</b> kk <i>0</i><b>0</b> kk <i>0</i><b>0</b> <i>0</i><b>0</b> <i>0</i><b>0</b> <i>0</i><b>0</b> <i>0</i><b>0</b> kk <i>0</i><b>0</b> kk <i>0</i><b>0</b> <i>0</i><b>0</b> <i>0</i><b>0</b> <i>0</i><b>0</b> <i>0</i><b>0</b> kk <i>0</i><b>0</b> kk <i>0</i><b>0</b> <i>0</i><b>0</b> <i>0</i><b>0</b> <i>0</i><b>0</b> <i>0</i><b>0</b> kk <i>0</i><b>0</b> kk <i>0</i><b>0</b> <i>0</i><b>0</b> <i>0</i><b>0</b> <i>0</i><b>0</b> <i>0</i><b>0</b> kk <i>0</i><b>0</b> kk <i>0</i><b>0</b> <i>0</i><b>0</b> <i>0</i><b>0</b> <i>0</i><b>0</b> <i>0</i><b>0</b> kk <i>0</i><b>0</b> kk <i>0</i><b>0</b> <i>0</i><b>0</b> <i>0</i><b>0</b> <i>0</i><b>0</b> <i>0</i><b>0</b> kk <i>0</i><b>0</b> kk</div>
<div style="left:118.8px;top:599.56px">kk kk kk kk <i>0</i><b>0</b> <i>0</i><b>0</b> <i>0</i><b>0</b> <i>0</i><b>0</b> kk kk kk kk <i>0</i><b>0</b> <i>0</i><b>0</b> <i>0</i><b>0</b> <i>0</i><b>0</b> kk kk kk kk <i>0</i><b>0</b> <i>0</i><b>0</b> <i>0</i><b>0</b> <i>0</i><b>0</b> kk kk kk kk <i>0</i><b>0</b> <i>0</i><b>0</b> <i>0</i><b>0</b> <i>0</i><b>0</b> kk kk kk kk <i>0</i><b>0</b> <i>0</i><b>0</b> <i>0</i><b>0</b> <i>0</i><b>0</b> kk kk kk kk <i>0</i><b>0</b> <i>0</i><b>0</b> <i>0</i><b>0</b> <i>0</i><b>0</b> kk kk kk kk <i>0</i><b>0</b> <i>0</i><b>0</b> <i>0</i><b>0</b> <i>0</i><b>0</b> kk kk kk kk</div>
<div style="left:118.8px;top:608.40px">kk <i>0</i><b>0</b> <i>0</i><b>0</b> <i>0</i><b>0</b> kk <i>0</i><b>0</b> <i>0</i><b>0</b> <i>0</i><b>0</b> kk <i>0</i><b>0</b> <i>0</i><b>0</b> <i>0</i><b>0</b> kk <i>0</i><b>0</b> <i>0</i><b>0</b> <i>0</i><b>0</b> kk <i>0</i><b>0</b> <i>0</i><b>0</b> <i>0</i><b>0</b> kk <i>0</i><b>0</b> <i>0</i><b>0</b> <i>0</i><b>0</b> kk <i>0</i><b>0</b> <i>0</i><b>0</b> <i>0</i><b>0</b> kk <i>0</i><b>0</b> <i>0</i><b>0</b> <i>0</i><b>0</b> kk <i>0</i><b>0</b> <i>0</i><b>0</b> <i>0</i><b>0</b> kk <i>0</i><b>0</b> <i>0</i><b>0</b> <i>0</i><b>0</b> kk <i>0</i><b>0</b> <i>0</i><b>0</b> <i>0</i><b>0</b> kk <i>0</i><b>0</b> <i>0</i><b>0</b> <i>0</i><b>0</b> kk <i>0</i><b>0</b> <i>0</i><b>0</b> <i>0</i><b>0</b> kk <i>0</i><b>0</b> <i>0</i><b>0</b> <i>0</i><b>0</b> kk <i>0</i><b>0</b> <i>0</i><b>0</b> <i>0</i><b>0</b> kk</div>
<div style="left:118.8px;top:617.24px">kk kk <i>0</i><b>0</b> <i>0</i><b>0</b> kk kk <i>0</i><b>0</b> <i>0</i><b>0</b> kk kk <i>0</i><b>0</b> <i>0</i><b>0</b> kk kk <i>0</i><b>0</b> <i>0</i><b>0</b> kk kk <i>0</i><b>0</b> <i>0</i><b>0</b> kk kk <i>0</i><b>0</b> <i>0</i><b>0</b> kk kk <i>0</i><b>0</b> <i>0</i><b>0</b> kk kk <i>0</i><b>0</b> <i>0</i><b>0</b> kk kk <i>0</i><b>0</b> <i>0</i><b>0</b> kk kk <i>0</i><b>0</b> <i>0</i><b>0</b> kk kk <i>0</i><b>0</b> <i>0</i><b>0</b> kk kk <i>0</i><b>0</b> <i>0</i><b>0</b> kk kk <i>0</i><b>0</b> <i>0</i><b>0</b> kk kk <i>0</i><b>0</b> <i>0</i><b>0</b> kk kk <i>0</i><b>0</b> <i>0</i><b>0</b> kk kk</div>
<div style="left:118.8px;top:626.08px">kk <i>0</i><b>0</b> kk <i>0</i><b>0</b> kk <i>0</i><b>0</b> kk <i>0</i><b>0</b> kk <i>0</i><b>0</b> kk <i>0</i><b>0</b> kk <i>0</i><b>0</b> kk <i>0</i><b>0</b> kk <i>0</i><b>0</b> kk <i>0</i><b>0</b> kk <i>0</i><b>0</b> kk <i>0</i><b>0</b> kk <i>0</i><b>0</b> kk <i>0</i><b>0</b> kk <i>0</i><b>0</b> kk <i>0</i><b>0</b> kk <i>0</i><b>0</b> kk <i>0</i><b>0</b> kk <i>0</i><b>0</b> kk <i>0</i><b>0</b> kk <i>0</i><b>0</b> kk <i>0</i><b>0</b> kk <i>0</i><b>0</b> kk <i>0</i><b>0</b> kk <i>0</i><b>0</b> kk <i>0</i><b>0</b> kk <i>0</i><b>0</b> kk <i>0</i><b>0</b> kk <i>0</i><b>0</b> kk <i>0</i><b>0</b> kk <i>0</i><b>0</b> kk</div>
<div style="left:118.8px;top:634.92px">kk kk kk kk kk kk kk kk kk kk kk kk kk kk kk kk kk kk kk kk kk kk kk kk kk kk kk kk kk kk kk kk kk kk kk kk kk kk kk kk kk kk kk kk kk kk kk kk kk kk kk kk kk kk kk kk kk kk kk kk kk kk kk kk</div>
</div>
<div style="left:119px;top:654px;width:1052px;height:8px;background:#3a3a36;"></div>
<div style="left:119px;top:87.1px;width:8px;height:0.8px;background:#a94641;"></div>
<div style="left:130.6px;top:95.1px;width:7.6px;height:0.8px;background:#a94641;"></div>
<div style="left:6px;top:6px;width:16px;height:16px;background:#272927;border-radius:1px"></div>
<svg style="left:6px;top:6px;" width="16" height="16" viewBox="0 0 16 16"><path d="M6 4 L9.8 8.2" stroke="#60625f" stroke-width=".7" fill="none"/></svg>
<svg style="left:10px;top:10px;" width="16" height="16" viewBox="0 0 100 100"><path d="M74 3 L74 30 L15 76 L4 67 Z M74 97 L74 70 L15 24 L4 33 Z" fill="#2480c6"/><path d="M72 1 L98 14 V86 L72 99 Z" fill="#5cb4f4"/></svg>
<span class="t fs" style="left:43.50px;top:10.60px;font-size:13px;line-height:15.60px;color:#dedede;transform:scaleX(1.000);">文件(F)</span>
<span class="t fs" style="left:102.00px;top:10.60px;font-size:13px;line-height:15.60px;color:#dedede;transform:scaleX(0.995);">编辑(E)</span>
<span class="t fs" style="left:161.00px;top:10.60px;font-size:13px;line-height:15.60px;color:#dedede;transform:scaleX(0.988);">选择(S)</span>
<svg style="left:222px;top:16px;" width="16" height="5" viewBox="0 0 16 5"><circle cx="2.6" cy="2.4" r="1" fill="#dedede"/><circle cx="7.6" cy="2.4" r="1" fill="#dedede"/><circle cx="12.6" cy="2.4" r="1" fill="#dedede"/></svg>
<svg style="left:321px;top:12px;" width="14" height="13" viewBox="0 0 14 13"><path d="M13 6.4 H1.6 M6.6 1.2 L1.4 6.4 L6.6 11.6" stroke="#dcdcdc" stroke-width="1.25" fill="none"/></svg>
<svg style="left:347px;top:12px;" width="14" height="13" viewBox="0 0 14 13"><path d="M1 6.4 H12.4 M7.4 1.2 L12.6 6.4 L7.4 11.6" stroke="#9c9c9a" stroke-width="1.25" fill="none"/></svg>
<div style="left:375px;top:6.5px;width:602px;height:23px;background:#5d5d5b;border:1px solid #70706e;border-radius:5px"></div>
<span class="t fs" style="left:623.70px;top:7.64px;font-size:13.6px;line-height:16.32px;color:#2c2c2c;transform:scaleX(1.059);">~ : nvim — Konsole</span>
<svg style="left:652px;top:10px;" width="16" height="16" viewBox="0 0 16 16"><circle cx="10.2" cy="5.8" r="4.3" stroke="#e6e6e6" stroke-width="1" fill="none"/><path d="M7 9 L2 14.6" stroke="#e6e6e6" stroke-width="1"/></svg>
<span class="t fs" style="left:672.70px;top:11.76px;font-size:12.4px;line-height:14.88px;color:#ececec;transform:scaleX(1.126);">2072</span>
<svg style="left:989.3px;top:10.6px;" width="17.1" height="14.3" viewBox="0 0 17 14.5"><g stroke="#e8e8e8" fill="none" stroke-width="1.5"><path d="M2.6 5.8 C1.2 6.6 .9 7.8 .9 9.4 C2.4 12.2 5.4 13.6 8.5 13.6 C11.6 13.6 14.6 12.2 16.1 9.4 C16.1 7.8 15.8 6.6 14.4 5.8"/><rect x="2.5" y="1" width="5.5" height="6.2" rx="2.5"/><rect x="9" y="1" width="5.5" height="6.2" rx="2.5"/><path d="M6.3 9 V11.2 M10.7 9 V11.2" stroke-width="1.6"/></g></svg>
<svg style="left:1008px;top:15px;" width="5" height="4" viewBox="0 0 5 4"><path d="M.6 .8 L2.5 2.6 L4.4 .8" stroke="#8a8a88" stroke-width=".8" fill="none"/></svg>
<svg style="left:1028px;top:11px;" width="15" height="14" viewBox="0 0 15 14"><rect x="1.4" y="1.8" width="4.6" height="10.8" rx=".8" fill="none" stroke="#dcdcdc" stroke-width="1.1"/><rect x="9.6" y="1.8" width="3.6" height="3.6" rx=".6" fill="none" stroke="#dcdcdc" stroke-width="1.1"/><rect x="9.6" y="8.6" width="3.6" height="4" rx=".6" fill="none" stroke="#dcdcdc" stroke-width="1.1"/></svg>
<svg style="left:1054px;top:11px;" width="14" height="14" viewBox="0 0 14 14"><rect x=".6" y=".6" width="12.8" height="12.8" rx="1.6" fill="none" stroke="#dcdcdc" stroke-width="1.2"/><path d="M.6 2 Q.6 .6 2 .6 H5.6 V13.4 H2 Q.6 13.4 .6 12 Z" fill="#dcdcdc"/></svg>
<svg style="left:1080px;top:11px;" width="14" height="14" viewBox="0 0 14 14"><rect x=".6" y=".6" width="12.8" height="12.8" rx="1.6" fill="none" stroke="#dcdcdc" stroke-width="1.2"/><path d="M.6 9.2 H13.4 V12 Q13.4 13.4 12 13.4 H2 Q.6 13.4 .6 12 Z" fill="#dcdcdc"/></svg>
<svg style="left:1106px;top:11px;" width="14" height="14" viewBox="0 0 14 14"><rect x=".6" y=".6" width="12.8" height="12.8" rx="1.6" fill="none" stroke="#dcdcdc" stroke-width="1.2"/><path d="M8.4 .6 H12 Q13.4 .6 13.4 2 V12 Q13.4 13.4 12 13.4 H8.4 Z" fill="#dcdcdc"/></svg>
<div style="left:1281px;top:18.8px;width:10.4px;height:2.3px;background:#f0f0f0;"></div>
<svg style="left:1298px;top:11px;" width="12" height="7" viewBox="0 0 12 7"><path d="M.8 .9 L5.6 5.6 L10.6 .9" stroke="#1f1f1f" stroke-width="1.1" fill="none"/></svg>
<svg style="left:1312px;top:10px;" width="12" height="12" viewBox="0 0 12 12"><path d="M1.7 3.4 V10.3 H8.6" stroke="#f0f0f0" stroke-width="1.9" fill="none"/><rect x="5.4" y="1.9" width="5" height="5.2" fill="none" stroke="#f0f0f0" stroke-width="2.1"/></svg>
<svg style="left:1322px;top:8px;" width="12" height="12" viewBox="0 0 12 12"><path d="M6.1 1 L11 5.9 L6.1 10.8 L1.2 5.9 Z" stroke="#1f1f1f" stroke-width="1.1" fill="none"/></svg>
<svg style="left:1344px;top:8px;" width="14" height="14" viewBox="0 0 14 14"><path d="M4 1.8 L12 10 M12 1.8 L4 10" stroke="#2a2a2a" stroke-width="1" fill="none"/><path d="M1.4 3.4 L11 12.8 M11 3.4 L1.4 12.8" stroke="#f0f0f0" stroke-width="1.9" fill="none"/></svg>
<svg style="left:17px;top:42px;-webkit-text-stroke:.12px #1c1e1c;" width="19" height="19" viewBox="0 0 19 19"><g stroke="#1c1e1c" stroke-width="1.15" fill="none"><path d="M1.6 2 V16.2 H10.6"/><path d="M1.6 2 H6 V4.4 H16.4 V11"/><path d="M11.6 14.2 H17 M14.3 11.6 V16.9"/></g><rect x="6" y="1.4" width="8" height="3.2" fill="#1c1e1c"/></svg>
<span class="t fs" style="left:41.40px;top:43.80px;font-size:13px;line-height:15.60px;color:#1c1e1c;transform:scaleX(0.995);-webkit-text-stroke:.12px #1c1e1c;">新建标签页(N)</span>
<svg style="left:145px;top:43px;-webkit-text-stroke:.12px #1c1e1c;" width="18" height="16" viewBox="0 0 18 16"><g stroke="#1c1e1c" fill="none"><path d="M1.5 1.6 V14.4 H7.9 V1.6" stroke-width="1"/><path d="M10.1 1.6 V14.4 H16.5 V1.6" stroke-width="1"/><path d="M1 1.6 H8.4 M9.6 1.6 H17" stroke-width="2"/></g></svg>
<span class="t fs" style="left:169.60px;top:43.80px;font-size:13px;line-height:15.60px;color:#1c1e1c;transform:scaleX(0.984);-webkit-text-stroke:.12px #1c1e1c;">拆分视图</span>
<svg style="left:230px;top:48.6px;-webkit-text-stroke:.12px #1c1e1c;" width="13" height="7" viewBox="0 0 13 7"><path d="M.8 .9 L6.2 5.6 L11.6 .9" stroke="#1c1e1c" stroke-width="1.1" fill="none"/></svg>
<svg style="left:1066px;top:44px;" width="15" height="15" viewBox="0 0 15 15"><g stroke="#72746e" stroke-width="1.1" fill="none"><path d="M4.4 3.6 V1.2 H10.4 L13.4 4.2 V11 H11"/><path d="M1 3.8 H7.4 L10.6 7 V14 H1 Z"/></g></svg>
<span class="t fs" style="left:1089.60px;top:43.80px;font-size:13px;line-height:15.60px;color:#72746e;transform:scaleX(0.964);">复制(C)</span>
<svg style="left:1153.6px;top:43.4px;-webkit-text-stroke:.12px #1c1e1c;" width="15" height="16" viewBox="0 0 15 16"><rect x=".9" y="2.6" width="13.2" height="12.4" fill="none" stroke="#1c1e1c" stroke-width="1.2"/><rect x="3.6" y=".6" width="7.8" height="3.6" fill="#1c1e1c"/><path d="M3.6 6.8 H11.4 M3.6 9.3 H11.4 M3.6 11.8 H7.6" stroke="#1c1e1c" stroke-width="1"/></svg>
<span class="t fs" style="left:1175.90px;top:43.80px;font-size:13px;line-height:15.60px;color:#1c1e1c;transform:scaleX(1.005);-webkit-text-stroke:.12px #1c1e1c;">粘贴(P)</span>
<svg style="left:1239px;top:42px;-webkit-text-stroke:.12px #1c1e1c;" width="20" height="19" viewBox="0 0 20 19"><circle cx="7" cy="7.4" r="5.4" stroke="#1c1e1c" stroke-width="1.1" fill="none"/><path d="M10.8 11.4 L17.4 17" stroke="#1c1e1c" stroke-width="1.1"/></svg>
<span class="t fs" style="left:1263.40px;top:43.80px;font-size:13px;line-height:15.60px;color:#1c1e1c;transform:scaleX(1.019);-webkit-text-stroke:.12px #1c1e1c;">查找(F)...</span>
<div style="left:1335px;top:45px;width:16px;height:2px;background:#1c1e1c;-webkit-text-stroke:.12px #1c1e1c;"></div>
<div style="left:1335px;top:50px;width:16px;height:2px;background:#1c1e1c;-webkit-text-stroke:.12px #1c1e1c;"></div>
<div style="left:1335px;top:55px;width:16px;height:2px;background:#1c1e1c;-webkit-text-stroke:.12px #1c1e1c;"></div>
<div style="left:88px;top:35px;width:128.1px;height:14px;background:rgba(255,255,255,.06);border-right:1px solid #565853"></div>
<svg style="left:93.5px;top:39.5px;" width="5" height="5" viewBox="0 0 5 5"><circle cx="2.4" cy="2.5" r="1.5" fill="#6ca7d4" opacity=".45"/><path d="M4 1.2 A2 2 0 1 0 4 3.8" stroke="#6ca7d4" stroke-width="1.05" fill="none"/><circle cx="4.3" cy="2.5" r=".5" fill="#6ca7d4" opacity=".8"/></svg>
<span class="t fs" style="left:100.70px;top:38.52px;font-size:5.8px;line-height:6.96px;color:#84b49b;transform:scaleX(0.992);-webkit-text-stroke:.18px currentColor;">A_New_World_New_Me_New_Array.cpp U</span>
<div style="left:216.1px;top:35px;width:49.3px;height:14px;background:rgba(255,255,255,.06);border-right:1px solid #565853"></div>
<svg style="left:221.6px;top:39.5px;" width="5" height="5" viewBox="0 0 5 5"><circle cx="2.4" cy="2.5" r="1.5" fill="#6ca7d4" opacity=".45"/><path d="M4 1.2 A2 2 0 1 0 4 3.8" stroke="#6ca7d4" stroke-width="1.05" fill="none"/><circle cx="4.3" cy="2.5" r=".5" fill="#6ca7d4" opacity=".8"/></svg>
<span class="t fs" style="left:230.60px;top:38.52px;font-size:5.8px;line-height:6.96px;color:#84b49b;transform:scaleX(0.985);-webkit-text-stroke:.18px currentColor;">F.cpp</span>
<span class="t fs" style="left:250.00px;top:38.52px;font-size:5.8px;line-height:6.96px;color:#84b49b;transform:scaleX(0.860);-webkit-text-stroke:.18px currentColor;">U</span>
<svg style="left:270.9px;top:39.5px;" width="5" height="5" viewBox="0 0 5 5"><circle cx="2.4" cy="2.5" r="1.5" fill="#6ca7d4" opacity=".45"/><path d="M4 1.2 A2 2 0 1 0 4 3.8" stroke="#6ca7d4" stroke-width="1.05" fill="none"/><circle cx="4.3" cy="2.5" r=".5" fill="#6ca7d4" opacity=".8"/></svg>
<div style="left:319.7px;top:35px;width:203.5px;height:14px;background:rgba(255,255,255,.06);border-right:1px solid #565853"></div>
<svg style="left:325.2px;top:39.5px;" width="5" height="5" viewBox="0 0 5 5"><circle cx="2.4" cy="2.5" r="1.5" fill="#6ca7d4" opacity=".45"/><path d="M4 1.2 A2 2 0 1 0 4 3.8" stroke="#6ca7d4" stroke-width="1.05" fill="none"/><circle cx="4.3" cy="2.5" r=".5" fill="#6ca7d4" opacity=".8"/></svg>
<span class="t fs" style="left:333.40px;top:38.52px;font-size:5.8px;line-height:6.96px;color:#84b49b;transform:scaleX(1.012);-webkit-text-stroke:.18px currentColor;">B_Having_Been_a_Treasurer_in_the_Past_I_Help_Goblins_Deceive.cpp U</span>
<div style="left:523.2px;top:35px;width:189.8px;height:14px;background:rgba(255,255,255,.06);border-right:1px solid #565853"></div>
<svg style="left:528.7px;top:39.5px;" width="5" height="5" viewBox="0 0 5 5"><circle cx="2.4" cy="2.5" r="1.5" fill="#6ca7d4" opacity=".45"/><path d="M4 1.2 A2 2 0 1 0 4 3.8" stroke="#6ca7d4" stroke-width="1.05" fill="none"/><circle cx="4.3" cy="2.5" r=".5" fill="#6ca7d4" opacity=".8"/></svg>
<span class="t fs" style="left:537.40px;top:38.52px;font-size:5.8px;line-height:6.96px;color:#84b49b;transform:scaleX(0.983);-webkit-text-stroke:.18px currentColor;">C_Creating_Keys_for_StORages_Has_Become_My_Main_Skill.cpp U</span>
<div style="left:713px;top:35px;width:192.5px;height:14px;background:rgba(255,255,255,.06);border-right:1px solid #565853"></div>
<svg style="left:718.5px;top:39.5px;" width="5" height="5" viewBox="0 0 5 5"><circle cx="2.4" cy="2.5" r="1.5" fill="#6ca7d4" opacity=".45"/><path d="M4 1.2 A2 2 0 1 0 4 3.8" stroke="#6ca7d4" stroke-width="1.05" fill="none"/><circle cx="4.3" cy="2.5" r=".5" fill="#6ca7d4" opacity=".8"/></svg>
<span class="t fs" style="left:726.50px;top:38.52px;font-size:5.8px;line-height:6.96px;color:#84b49b;transform:scaleX(1.008);-webkit-text-stroke:.18px currentColor;">D_For_Wizards_the_Exam_Is_Easy_but_I_Couldn_t_Handle_It.cpp U</span>
<div style="left:905.5px;top:35px;width:208.1px;height:14px;background:rgba(255,255,255,.06);border-right:1px solid #565853"></div>
<svg style="left:911.0px;top:39.5px;" width="5" height="5" viewBox="0 0 5 5"><circle cx="2.4" cy="2.5" r="1.5" fill="#6ca7d4" opacity=".45"/><path d="M4 1.2 A2 2 0 1 0 4 3.8" stroke="#6ca7d4" stroke-width="1.05" fill="none"/><circle cx="4.3" cy="2.5" r=".5" fill="#6ca7d4" opacity=".8"/></svg>
<span class="t fs" style="left:919.00px;top:38.52px;font-size:5.8px;line-height:6.96px;color:#84b49b;transform:scaleX(0.993);-webkit-text-stroke:.18px currentColor;">E_Do_You_Love_Your_Hero_and_His_Two_Hit_Multi_Target_Attacks.cpp U</span>
<div style="left:1113.6px;top:35px;width:100.4px;height:14px;background:rgba(255,255,255,.06);border-right:1px solid #565853"></div>
<svg style="left:1119.1px;top:39.5px;" width="5" height="5" viewBox="0 0 5 5"><circle cx="2.4" cy="2.5" r="1.5" fill="#6ca7d4" opacity=".45"/><path d="M4 1.2 A2 2 0 1 0 4 3.8" stroke="#6ca7d4" stroke-width="1.05" fill="none"/><circle cx="4.3" cy="2.5" r=".5" fill="#6ca7d4" opacity=".8"/></svg>
<span class="t fs" style="left:1126.40px;top:38.52px;font-size:5.8px;line-height:6.96px;color:#84b49b;transform:scaleX(1.010);-webkit-text-stroke:.18px currentColor;">F_Goodbye_Banker_Life.cpp U</span>
<div style="left:1214px;top:35px;width:22px;height:14px;background:rgba(255,255,255,.06);border-right:1px solid #565853"></div>
<svg style="left:1219.5px;top:39.5px;" width="5" height="5" viewBox="0 0 5 5"><circle cx="2.4" cy="2.5" r="1.5" fill="#6ca7d4" opacity=".45"/><path d="M4 1.2 A2 2 0 1 0 4 3.8" stroke="#6ca7d4" stroke-width="1.05" fill="none"/><circle cx="4.3" cy="2.5" r=".5" fill="#6ca7d4" opacity=".8"/></svg>
<span class="t fs" style="left:1227.50px;top:38.52px;font-size:5.8px;line-height:6.96px;color:#84b49b;transform:scaleX(0.921);-webkit-text-stroke:.18px currentColor;">G_I</span>
<span class="t fs" style="left:278.40px;top:38.52px;font-size:5.8px;line-height:6.96px;color:#d8968a;transform:scaleX(0.901);-webkit-text-stroke:.18px currentColor;">test.cpp</span>
<span class="t fs" style="left:299.00px;top:38.52px;font-size:5.8px;line-height:6.96px;color:#d8968a;transform:scaleX(0.871);-webkit-text-stroke:.18px currentColor;">2, U</span>
<div style="left:312.2px;top:40.2px;width:3.6px;height:3.6px;background:#ececec;border-radius:50%"></div>
<div style="left:88px;top:58px;width:1210px;height:1px;background:#555752;"></div>
<svg style="left:95.4px;top:50.9px;" width="5" height="5" viewBox="0 0 5 5"><circle cx="2.4" cy="2.5" r="1.5" fill="#6ca7d4" opacity=".45"/><path d="M4 1.2 A2 2 0 1 0 4 3.8" stroke="#6ca7d4" stroke-width="1.05" fill="none"/><circle cx="4.3" cy="2.5" r=".5" fill="#6ca7d4" opacity=".8"/></svg>
<span class="t fs" style="left:103.40px;top:49.92px;font-size:5.8px;line-height:6.96px;color:#dededa;transform:scaleX(1.018);-webkit-text-stroke:.18px currentColor;">test.cpp</span>
<svg style="left:124px;top:60.5px;" width="7" height="4" viewBox="0 0 7 4"><path d="M.8 .6 L3.4 3 L6 .6" stroke="#262826" stroke-width=".9" fill="none"/></svg>
<svg style="left:1238px;top:38px;" width="60" height="8" viewBox="0 0 60 8"><g stroke="#c9c9c5" stroke-width=".7" fill="none"><path d="M1.6 1.6 L5.4 3.9 L1.6 6.2 Z"/><path d="M8 3.4 L9.4 4.6 L10.8 3.4"/><circle cx="19" cy="3.9" r="2.3"/><circle cx="19" cy="3.9" r=".9"/><path d="M27.4 1.6 H31 V5.4 H27.4 Z M29 3.2 H32.6 V7 H29 Z"/><path d="M37.4 1.6 H42.6 V6.2 H37.4 Z M40 1.6 V6.2"/></g><g fill="#c9c9c5"><circle cx="48.6" cy="3.9" r=".55"/><circle cx="50.6" cy="3.9" r=".55"/><circle cx="52.6" cy="3.9" r=".55"/></g></svg>
<svg style="left:1300px;top:38px;" width="66" height="8" viewBox="0 0 66 8"><g stroke="#bdbdb9" stroke-width=".7" fill="none"><path d="M3.4 3.8 H9"/><path d="M25 3.8 H30 M27.5 1.3 V6.3"/><path d="M35 2 H39.4 V6.4 H35.6 M37.2 3 V4.6 H38.4"/><path d="M55.2 2 L58.8 5.8 M58.8 2 L55.2 5.8"/></g><g fill="#bdbdb9"><circle cx="44.6" cy="3.9" r=".55"/><circle cx="46.6" cy="3.9" r=".55"/><circle cx="48.6" cy="3.9" r=".55"/></g></svg>
<span class="t fm" style="left:22.40px;top:74.60px;font-size:16px;line-height:19.20px;color:#8a5236;transform:scaleX(0.934);">1</span>
<div style="left:58.1px;top:75.5px;width:0.9px;height:18.5px;background:#7a7c80;"></div>
<div style="left:0px;top:54px;width:1.2px;height:20px;background:#f4f4f4;"></div>
<svg style="left:4px;top:37px;" width="14" height="14" viewBox="0 0 14 14"><g stroke="#a9aba6" stroke-width=".9" fill="none"><path d="M5.4 3.2 V1.2 H9.6 L12 3.6 V9.6 H9.4"/><path d="M2.4 3.6 H6.6 L9.2 6.2 V12.4 H2.4 Z"/></g><circle cx="9.7" cy="10.9" r="3.1" fill="#4a9be8"/><path d="M9.7 9.3 V11.2 M9.7 12 V12.6" stroke="#fff" stroke-width=".8"/></svg>
<svg style="left:4px;top:55px;" width="14" height="14" viewBox="0 0 14 14"><circle cx="8.4" cy="5.4" r="3.3" stroke="#f2f2f2" stroke-width="1" fill="none"/><path d="M6 7.9 L1.6 12.6" stroke="#f2f2f2" stroke-width="1"/></svg>
<svg style="left:4px;top:75px;" width="14" height="16" viewBox="0 0 14 16"><g stroke="#8b8d8c" stroke-width=".8" fill="none"><circle cx="4" cy="2.2" r="1.3"/><circle cx="9.6" cy="4.6" r="1.3"/><path d="M4 3.6 V10 M9.6 6 C9.6 8 4 7 4 9.4"/></g><ellipse cx="7.7" cy="11.2" rx="4.6" ry="3.6" fill="#2277cf"/></svg>
<span class="t fn" style="left:8.90px;top:84.14px;font-size:3.6px;line-height:4.32px;color:#fff;font-weight:700;transform:scaleX(1.016);">111</span>
<svg style="left:4px;top:95px;" width="14" height="14" viewBox="0 0 14 14"><g stroke="#8b8d8c" stroke-width=".85" fill="none"><path d="M5.2 2 L11.6 6.4 L5.2 10.6 Z"/><rect x="1.6" y="8.4" width="3.4" height="3.4" fill="#27292b"/></g></svg>
<svg style="left:4px;top:114.4px;" width="14" height="14" viewBox="0 0 14 14"><g stroke="#8b8d8c" stroke-width=".85" fill="none"><path d="M1.8 4.4 H5.6 V8.2 H9.4 V12 H1.8 Z M5.6 8.2 H1.8 M5.6 8.2 V12"/><rect x="8" y="1.6" width="3.6" height="3.6" rx=".5"/></g></svg>
<svg style="left:4px;top:134px;" width="14" height="14" viewBox="0 0 14 14"><g stroke="#8b8d8c" stroke-width=".85" fill="none"><path d="M1.8 2 H11.2 V8 M6.6 9.4 H1.8 V2 M3.6 11.4 H6"/><circle cx="9.8" cy="10.2" r="2.1"/></g></svg>
<svg style="left:4px;top:153.6px;" width="14" height="14" viewBox="0 0 14 14"><g fill="#8b8d8c"><rect x="1.4" y="6" width="2.6" height="6" rx=".5"/><rect x="5.4" y="2.6" width="2.6" height="9.4" rx=".5"/><rect x="9.4" y="5" width="2.6" height="7" rx=".5"/></g></svg>
<svg style="left:4px;top:172.6px;" width="14" height="14" viewBox="0 0 14 14"><g stroke="#8b8d8c" stroke-width=".85" fill="none"><rect x="1.6" y="1.8" width="4" height="4" rx="1"/><rect x="7.6" y="7.8" width="4" height="4" rx="1"/><path d="M3.6 5.8 V9.8 H7.6"/></g></svg>
<svg style="left:4px;top:191.6px;" width="14" height="14" viewBox="0 0 14 14"><path d="M1 6.6 H9.4 C10 5 11 4.6 12.6 5.4 C12 6.2 11.4 6.8 10.6 7 C9.8 9.8 7.8 11 5.4 11 C2.6 11 1.2 9.2 1 6.6 Z" fill="#8b8d8c"/><path d="M3 5.8 H7.4 M4.4 4.4 H7.4 M6 3 H7.4" stroke="#8b8d8c" stroke-width="1.1"/></svg>
<svg style="left:4px;top:210.4px;" width="14" height="14" viewBox="0 0 14 14"><circle cx="6.8" cy="6.8" r="4.9" stroke="#8b8d8c" stroke-width=".85" fill="none"/><path d="M4.8 10.8 V9 C3.6 8.4 3.4 6.4 4.6 5.4 C4.4 4.6 4.6 4.2 4.8 4 C5.4 4 5.8 4.4 6 4.6 H7.6 C7.8 4.4 8.2 4 8.8 4 C9 4.2 9.2 4.6 9 5.4 C10.2 6.4 10 8.4 8.8 9 V10.8 Z" fill="#8b8d8c"/></svg>
<svg style="left:3.3px;top:722.4px;" width="14" height="14" viewBox="0 0 14 14"><g stroke="#8b8d8c" stroke-width=".85" fill="none"><circle cx="6.4" cy="6.6" r="4.8"/><circle cx="6.4" cy="5" r="1.8"/><path d="M2.8 9.8 C3.6 7.6 9.2 7.6 10 9.8"/></g></svg>
<svg style="left:27px;top:39px;" width="58" height="7" viewBox="0 0 58 7"><g stroke="#9a9c9c" stroke-width=".7" fill="none"><path d="M1.4 1.4 H4.6 V5.4 H1.4 Z M2.4 6 H6"/><path d="M15.2 3.4 A1.9 1.9 0 1 1 13.2 1.5 M13.2 .4 V2.6"/><path d="M21 2 H25.4 V5.4 H21 Z"/><path d="M31.4 1 H34 L35.4 2.4 V6 H31.4 Z M34.6 4.6 H37"/><path d="M40.6 2 H45 M40.6 3.8 H45 M40.6 5.6 H43.4"/><path d="M50.4 2.4 L53.2 1.2 L55.8 2.4 L53 3.8 Z M50.4 4.4 L53 5.8 L55.8 4.4"/></g></svg>
<div style="left:27px;top:51px;width:56px;height:12px;background:rgba(255,255,255,.09);"></div>
<span class="t fs" style="left:31.00px;top:54.12px;font-size:4.8px;line-height:5.76px;color:#9d9f9a;transform:scaleX(1.041);">搜索</span>
<span class="t fs" style="left:58.50px;top:54.56px;font-size:4.4px;line-height:5.28px;color:#d8d8d4;transform:scaleX(0.878);">Aa</span>
<span class="t fs" style="left:65.00px;top:54.56px;font-size:4.4px;line-height:5.28px;color:#d8d8d4;transform:scaleX(1.203);">ab</span>
<svg style="left:73px;top:54px;" width="7" height="6" viewBox="0 0 7 6"><path d="M1 4.8 H3 V2.8 H1 Z" fill="#d8d8d4"/><path d="M5 .8 V3.6 M3.8 1.5 L6.2 2.9 M6.2 1.5 L3.8 2.9" stroke="#d8d8d4" stroke-width=".6"/></svg>
<svg style="left:21px;top:62.2px;" width="6" height="4" viewBox="0 0 6 4"><path d="M.8 .6 L3 2.6 L5.2 .6" stroke="#a9bde0" stroke-width=".8" fill="none"/></svg>
<div style="left:27px;top:66px;width:46px;height:10.8px;background:rgba(255,255,255,.09);"></div>
<span class="t fs" style="left:31.00px;top:68.52px;font-size:4.8px;line-height:5.76px;color:#9d9f9a;transform:scaleX(1.041);">替换</span>
<span class="t fs" style="left:66.00px;top:69.08px;font-size:4.2px;line-height:5.04px;color:#d8d8d4;transform:scaleX(0.858);">AB</span>
<svg style="left:77px;top:67px;" width="7" height="7" viewBox="0 0 7 7"><g stroke="#a4a6a2" stroke-width=".7" fill="none"><path d="M1.4 2.4 H4.6 V6 H1.4 Z"/><path d="M3 2.4 V.8 H6 V4.4 H4.6"/></g></svg>
<svg style="left:75px;top:78px;" width="8" height="3" viewBox="0 0 8 3"><g fill="#b4b4b0"><circle cx="1.4" cy="1.3" r=".6"/><circle cx="3.6" cy="1.3" r=".6"/><circle cx="5.8" cy="1.3" r=".6"/></g></svg>
<div style="left:998px;top:58px;width:169.4px;height:16px;background:rgba(20,22,20,.13);"></div>
<div style="left:998px;top:74px;width:169.4px;height:9.4px;background:rgba(255,255,255,.035);box-shadow:0 1px 2px rgba(0,0,0,.35)"></div>
<div style="left:998px;top:58px;width:0.8px;height:16px;background:#8a8c88;"></div>
<div style="left:998px;top:74px;width:0.8px;height:9.4px;background:#5a5c5e;"></div>
<div style="left:1007px;top:59px;width:74px;height:10.8px;background:rgba(255,255,255,.18);"></div>
<div style="left:1007px;top:72px;width:74px;height:2px;background:rgba(255,255,255,.18);"></div>
<div style="left:1007px;top:74px;width:74px;height:8.6px;background:rgba(255,255,255,.11);"></div>
<svg style="left:1001px;top:67.4px;" width="6" height="4" viewBox="0 0 6 4"><path d="M.8 .6 L3 2.6 L5.2 .6" stroke="#d6d6d2" stroke-width=".7" fill="none"/></svg>
<span class="t fs" style="left:1056.40px;top:62.08px;font-size:4.2px;line-height:5.04px;color:#d6d6d2;transform:scaleX(0.941);">Aa</span>
<span class="t fs" style="left:1064.40px;top:62.08px;font-size:4.2px;line-height:5.04px;color:#d6d6d2;transform:scaleX(1.417);">ab</span>
<svg style="left:1073px;top:61.6px;" width="7" height="6" viewBox="0 0 7 6"><path d="M1 5 H3 V3 H1 Z" fill="#d6d6d2"/><path d="M5 .8 V3.6 M3.8 1.5 L6.2 2.9 M6.2 1.5 L3.8 2.9" stroke="#d6d6d2" stroke-width=".6"/></svg>
<span class="t fs" style="left:1082.80px;top:61.42px;font-size:4.8px;line-height:5.76px;color:#f09078;transform:scaleX(1.000);-webkit-text-stroke:.15px #f09078;">无结果</span>
<svg style="left:1128px;top:61px;" width="36" height="7" viewBox="0 0 36 7"><g stroke="#b4b6b2" stroke-width=".7" fill="none"><path d="M3 6 V1 M1.2 2.8 L3 1 L4.8 2.8"/><path d="M13 1 V6 M11.2 4.2 L13 6 L14.8 4.2"/><path d="M21 1.6 H26 M21 3.5 H26 M21 5.4 H24.6"/><path d="M31 1.6 L34.4 5.2 M34.4 1.6 L31 5.2"/></g></svg>
<span class="t fs" style="left:1074.00px;top:74.20px;font-size:4px;line-height:4.80px;color:#d6d6d2;transform:scaleX(0.863);">AB</span>
<svg style="left:1083px;top:72.6px;" width="16" height="8" viewBox="0 0 16 8"><g stroke="#a6a8a5" stroke-width=".6" fill="none"><path d="M2.2 2.6 H4.4 V6 H2.2 Z M2.9 2.6 V1.6 H3.7 V2.6"/><path d="M11.4 2.8 H14 V6 H11.4 Z M11.4 1.8 H13 V2.8"/></g></svg>
<svg style="left:1180px;top:58.2px;clip-path:inset(0 0 0 0)" width="111" height="128" viewBox="0 0 111 128"><g fill="none" stroke-width="1.5"><path d="M0 0.75h3M0 2.75h6M0 4.75h3M6 4.75h3M0 6.75h12M0 8.75h3M12 8.75h3M0 10.75h6M12 10.75h6M0 12.75h3M6 12.75h3M12 12.75h3M18 12.75h3M0 14.75h24M0 16.75h3M24 16.75h3M0 18.75h6M24 18.75h6M0 20.75h3M6 20.75h3M24 20.75h3M30 20.75h3M0 22.75h12M24 22.75h12M0 24.75h3M12 24.75h3M24 24.75h3M36 24.75h3M0 26.75h6M12 26.75h6M24 26.75h6M36 26.75h6M0 28.75h3M6 28.75h3M12 28.75h3M18 28.75h3M24 28.75h3M30 28.75h3M36 28.75h3M42 28.75h3M0 30.75h48M0 32.75h3M48 32.75h3M0 34.75h6M48 34.75h6M0 36.75h3M6 36.75h3M48 36.75h3M54 36.75h3M0 38.75h12M48 38.75h12M0 40.75h3M12 40.75h3M48 40.75h3M60 40.75h3M0 42.75h6M12 42.75h6M48 42.75h6M60 42.75h6M0 44.75h3M6 44.75h3M12 44.75h3M18 44.75h3M48 44.75h3M54 44.75h3M60 44.75h3M66 44.75h3M0 46.75h24M48 46.75h24M0 48.75h3M24 48.75h3M48 48.75h3M72 48.75h3M0 50.75h6M24 50.75h6M48 50.75h6M72 50.75h6M0 52.75h3M6 52.75h3M24 52.75h3M30 52.75h3M48 52.75h3M54 52.75h3M72 52.75h3M78 52.75h3M0 54.75h12M24 54.75h12M48 54.75h12M72 54.75h12M0 56.75h3M12 56.75h3M24 56.75h3M36 56.75h3M48 56.75h3M60 56.75h3M72 56.75h3M84 56.75h3M0 58.75h6M12 58.75h6M24 58.75h6M36 58.75h6M48 58.75h6M60 58.75h6M72 58.75h6M84 58.75h6M0 60.75h3M6 60.75h3M12 60.75h3M18 60.75h3M24 60.75h3M30 60.75h3M36 60.75h3M42 60.75h3M48 60.75h3M54 60.75h3M60 60.75h3M66 60.75h3M72 60.75h3M78 60.75h3M84 60.75h3M90 60.75h3M0 62.75h96M0 64.75h3M96 64.75h3M0 66.75h6M96 66.75h6M0 68.75h3M6 68.75h3M96 68.75h3M102 68.75h3M0 70.75h12M96 70.75h12M0 72.75h3M12 72.75h3M96 72.75h3M108 72.75h3M0 74.75h6M12 74.75h6M96 74.75h6M108 74.75h3M0 76.75h3M6 76.75h3M12 76.75h3M18 76.75h3M96 76.75h3M102 76.75h3M108 76.75h3M0 78.75h24M96 78.75h15M0 80.75h3M24 80.75h3M96 80.75h3M0 82.75h6M24 82.75h6M96 82.75h6M0 84.75h3M6 84.75h3M24 84.75h3M30 84.75h3M96 84.75h3M102 84.75h3M0 86.75h12M24 86.75h12M96 86.75h12M0 88.75h3M12 88.75h3M24 88.75h3M36 88.75h3M96 88.75h3M108 88.75h3M0 90.75h6M12 90.75h6M24 90.75h6M36 90.75h6M96 90.75h6M108 90.75h3M0 92.75h3M6 92.75h3M12 92.75h3M18 92.75h3M24 92.75h3M30 92.75h3M36 92.75h3M42 92.75h3M96 92.75h3M102 92.75h3M108 92.75h3M0 94.75h48M96 94.75h15M0 96.75h3M48 96.75h3M96 96.75h3M0 98.75h6M48 98.75h6M96 98.75h6M0 100.75h3M6 100.75h3M48 100.75h3M54 100.75h3M96 100.75h3M102 100.75h3M0 102.75h12M48 102.75h12M96 102.75h12M0 104.75h3M12 104.75h3M48 104.75h3M60 104.75h3M96 104.75h3M108 104.75h3M0 106.75h6M12 106.75h6M48 106.75h6M60 106.75h6M96 106.75h6M108 106.75h3M0 108.75h3M6 108.75h3M12 108.75h3M18 108.75h3M48 108.75h3M54 108.75h3M60 108.75h3M66 108.75h3M96 108.75h3M102 108.75h3M108 108.75h3M0 110.75h24M48 110.75h24M96 110.75h15M0 112.75h3M24 112.75h3M48 112.75h3M72 112.75h3M96 112.75h3M0 114.75h6M24 114.75h6M48 114.75h6M72 114.75h6M96 114.75h6M0 116.75h3M6 116.75h3M24 116.75h3M30 116.75h3M48 116.75h3M54 116.75h3M72 116.75h3M78 116.75h3M96 116.75h3M102 116.75h3M0 118.75h12M24 118.75h12M48 118.75h12M72 118.75h12M96 118.75h12M0 120.75h3M12 120.75h3M24 120.75h3M36 120.75h3M48 120.75h3M60 120.75h3M72 120.75h3M84 120.75h3M96 120.75h3M108 120.75h3M0 122.75h6M12 122.75h6M24 122.75h6M36 122.75h6M48 122.75h6M60 122.75h6M72 122.75h6M84 122.75h6M96 122.75h6M108 122.75h3M0 124.75h3M6 124.75h3M12 124.75h3M18 124.75h3M24 124.75h3M30 124.75h3M36 124.75h3M42 124.75h3M48 124.75h3M54 124.75h3M60 124.75h3M66 124.75h3M72 124.75h3M78 124.75h3M84 124.75h3M90 124.75h3M96 124.75h3M102 124.75h3M108 124.75h3M0 126.75h111" stroke="#878985" stroke-dasharray="2.1 .9"/><path d="M3 4.75h3M3 8.75h9M6 10.75h6M3 12.75h3M9 12.75h3M15 12.75h3M3 16.75h21M6 18.75h18M3 20.75h3M9 20.75h15M27 20.75h3M12 22.75h12M3 24.75h9M15 24.75h9M27 24.75h9M6 26.75h6M18 26.75h6M30 26.75h6M3 28.75h3M9 28.75h3M15 28.75h3M21 28.75h3M27 28.75h3M33 28.75h3M39 28.75h3M3 32.75h45M6 34.75h42M3 36.75h3M9 36.75h39M51 36.75h3M12 38.75h36M3 40.75h9M15 40.75h33M51 40.75h9M6 42.75h6M18 42.75h30M54 42.75h6M3 44.75h3M9 44.75h3M15 44.75h3M21 44.75h27M51 44.75h3M57 44.75h3M63 44.75h3M24 46.75h24M3 48.75h21M27 48.75h21M51 48.75h21M6 50.75h18M30 50.75h18M54 50.75h18M3 52.75h3M9 52.75h15M27 52.75h3M33 52.75h15M51 52.75h3M57 52.75h15M75 52.75h3M12 54.75h12M36 54.75h12M60 54.75h12M3 56.75h9M15 56.75h9M27 56.75h9M39 56.75h9M51 56.75h9M63 56.75h9M75 56.75h9M6 58.75h6M18 58.75h6M30 58.75h6M42 58.75h6M54 58.75h6M66 58.75h6M78 58.75h6M3 60.75h3M9 60.75h3M15 60.75h3M21 60.75h3M27 60.75h3M33 60.75h3M39 60.75h3M45 60.75h3M51 60.75h3M57 60.75h3M63 60.75h3M69 60.75h3M75 60.75h3M81 60.75h3M87 60.75h3M3 64.75h93M6 66.75h90M3 68.75h3M9 68.75h87M99 68.75h3M12 70.75h84M3 72.75h9M15 72.75h81M99 72.75h9M6 74.75h6M18 74.75h78M102 74.75h6M3 76.75h3M9 76.75h3M15 76.75h3M21 76.75h75M99 76.75h3M105 76.75h3M24 78.75h72M3 80.75h21M27 80.75h69M99 80.75h12M6 82.75h18M30 82.75h66M102 82.75h9M3 84.75h3M9 84.75h15M27 84.75h3M33 84.75h63M99 84.75h3M105 84.75h6M12 86.75h12M36 86.75h60M108 86.75h3M3 88.75h9M15 88.75h9M27 88.75h9M39 88.75h57M99 88.75h9M6 90.75h6M18 90.75h6M30 90.75h6M42 90.75h54M102 90.75h6M3 92.75h3M9 92.75h3M15 92.75h3M21 92.75h3M27 92.75h3M33 92.75h3M39 92.75h3M45 92.75h51M99 92.75h3M105 92.75h3M48 94.75h48M3 96.75h45M51 96.75h45M99 96.75h12M6 98.75h42M54 98.75h42M102 98.75h9M3 100.75h3M9 100.75h39M51 100.75h3M57 100.75h39M99 100.75h3M105 100.75h6M12 102.75h36M60 102.75h36M108 102.75h3M3 104.75h9M15 104.75h33M51 104.75h9M63 104.75h33M99 104.75h9M6 106.75h6M18 106.75h30M54 106.75h6M66 106.75h30M102 106.75h6M3 108.75h3M9 108.75h3M15 108.75h3M21 108.75h27M51 108.75h3M57 108.75h3M63 108.75h3M69 108.75h27M99 108.75h3M105 108.75h3M24 110.75h24M72 110.75h24M3 112.75h21M27 112.75h21M51 112.75h21M75 112.75h21M99 112.75h12M6 114.75h18M30 114.75h18M54 114.75h18M78 114.75h18M102 114.75h9M3 116.75h3M9 116.75h15M27 116.75h3M33 116.75h15M51 116.75h3M57 116.75h15M75 116.75h3M81 116.75h15M99 116.75h3M105 116.75h6M12 118.75h12M36 118.75h12M60 118.75h12M84 118.75h12M108 118.75h3M3 120.75h9M15 120.75h9M27 120.75h9M39 120.75h9M51 120.75h9M63 120.75h9M75 120.75h9M87 120.75h9M99 120.75h9M6 122.75h6M18 122.75h6M30 122.75h6M42 122.75h6M54 122.75h6M66 122.75h6M78 122.75h6M90 122.75h6M102 122.75h6M3 124.75h3M9 124.75h3M15 124.75h3M21 124.75h3M27 124.75h3M33 124.75h3M39 124.75h3M45 124.75h3M51 124.75h3M57 124.75h3M63 124.75h3M69 124.75h3M75 124.75h3M81 124.75h3M87 124.75h3M93 124.75h3M99 124.75h3M105 124.75h3" stroke="#a82a58" stroke-dasharray="1.1 1.9"/><path d="M4.1 4.75h3M4.1 8.75h9M7.1 10.75h6M4.1 12.75h3M10.1 12.75h3M16.1 12.75h3M4.1 16.75h21M7.1 18.75h18M4.1 20.75h3M10.1 20.75h15M28.1 20.75h3M13.1 22.75h12M4.1 24.75h9M16.1 24.75h9M28.1 24.75h9M7.1 26.75h6M19.1 26.75h6M31.1 26.75h6M4.1 28.75h3M10.1 28.75h3M16.1 28.75h3M22.1 28.75h3M28.1 28.75h3M34.1 28.75h3M40.1 28.75h3M4.1 32.75h45M7.1 34.75h42M4.1 36.75h3M10.1 36.75h39M52.1 36.75h3M13.1 38.75h36M4.1 40.75h9M16.1 40.75h33M52.1 40.75h9M7.1 42.75h6M19.1 42.75h30M55.1 42.75h6M4.1 44.75h3M10.1 44.75h3M16.1 44.75h3M22.1 44.75h27M52.1 44.75h3M58.1 44.75h3M64.1 44.75h3M25.1 46.75h24M4.1 48.75h21M28.1 48.75h21M52.1 48.75h21M7.1 50.75h18M31.1 50.75h18M55.1 50.75h18M4.1 52.75h3M10.1 52.75h15M28.1 52.75h3M34.1 52.75h15M52.1 52.75h3M58.1 52.75h15M76.1 52.75h3M13.1 54.75h12M37.1 54.75h12M61.1 54.75h12M4.1 56.75h9M16.1 56.75h9M28.1 56.75h9M40.1 56.75h9M52.1 56.75h9M64.1 56.75h9M76.1 56.75h9M7.1 58.75h6M19.1 58.75h6M31.1 58.75h6M43.1 58.75h6M55.1 58.75h6M67.1 58.75h6M79.1 58.75h6M4.1 60.75h3M10.1 60.75h3M16.1 60.75h3M22.1 60.75h3M28.1 60.75h3M34.1 60.75h3M40.1 60.75h3M46.1 60.75h3M52.1 60.75h3M58.1 60.75h3M64.1 60.75h3M70.1 60.75h3M76.1 60.75h3M82.1 60.75h3M88.1 60.75h3M4.1 64.75h93M7.1 66.75h90M4.1 68.75h3M10.1 68.75h87M100.1 68.75h3M13.1 70.75h84M4.1 72.75h9M16.1 72.75h81M100.1 72.75h9M7.1 74.75h6M19.1 74.75h78M103.1 74.75h6M4.1 76.75h3M10.1 76.75h3M16.1 76.75h3M22.1 76.75h75M100.1 76.75h3M106.1 76.75h3M25.1 78.75h72M4.1 80.75h21M28.1 80.75h69M100.1 80.75h12M7.1 82.75h18M31.1 82.75h66M103.1 82.75h9M4.1 84.75h3M10.1 84.75h15M28.1 84.75h3M34.1 84.75h63M100.1 84.75h3M106.1 84.75h6M13.1 86.75h12M37.1 86.75h60M109.1 86.75h3M4.1 88.75h9M16.1 88.75h9M28.1 88.75h9M40.1 88.75h57M100.1 88.75h9M7.1 90.75h6M19.1 90.75h6M31.1 90.75h6M43.1 90.75h54M103.1 90.75h6M4.1 92.75h3M10.1 92.75h3M16.1 92.75h3M22.1 92.75h3M28.1 92.75h3M34.1 92.75h3M40.1 92.75h3M46.1 92.75h51M100.1 92.75h3M106.1 92.75h3M49.1 94.75h48M4.1 96.75h45M52.1 96.75h45M100.1 96.75h12M7.1 98.75h42M55.1 98.75h42M103.1 98.75h9M4.1 100.75h3M10.1 100.75h39M52.1 100.75h3M58.1 100.75h39M100.1 100.75h3M106.1 100.75h6M13.1 102.75h36M61.1 102.75h36M109.1 102.75h3M4.1 104.75h9M16.1 104.75h33M52.1 104.75h9M64.1 104.75h33M100.1 104.75h9M7.1 106.75h6M19.1 106.75h30M55.1 106.75h6M67.1 106.75h30M103.1 106.75h6M4.1 108.75h3M10.1 108.75h3M16.1 108.75h3M22.1 108.75h27M52.1 108.75h3M58.1 108.75h3M64.1 108.75h3M70.1 108.75h27M100.1 108.75h3M106.1 108.75h3M25.1 110.75h24M73.1 110.75h24M4.1 112.75h21M28.1 112.75h21M52.1 112.75h21M76.1 112.75h21M100.1 112.75h12M7.1 114.75h18M31.1 114.75h18M55.1 114.75h18M79.1 114.75h18M103.1 114.75h9M4.1 116.75h3M10.1 116.75h15M28.1 116.75h3M34.1 116.75h15M52.1 116.75h3M58.1 116.75h15M76.1 116.75h3M82.1 116.75h15M100.1 116.75h3M106.1 116.75h6M13.1 118.75h12M37.1 118.75h12M61.1 118.75h12M85.1 118.75h12M109.1 118.75h3M4.1 120.75h9M16.1 120.75h9M28.1 120.75h9M40.1 120.75h9M52.1 120.75h9M64.1 120.75h9M76.1 120.75h9M88.1 120.75h9M100.1 120.75h9M7.1 122.75h6M19.1 122.75h6M31.1 122.75h6M43.1 122.75h6M55.1 122.75h6M67.1 122.75h6M79.1 122.75h6M91.1 122.75h6M103.1 122.75h6M4.1 124.75h3M10.1 124.75h3M16.1 124.75h3M22.1 124.75h3M28.1 124.75h3M34.1 124.75h3M40.1 124.75h3M46.1 124.75h3M52.1 124.75h3M58.1 124.75h3M64.1 124.75h3M70.1 124.75h3M76.1 124.75h3M82.1 124.75h3M88.1 124.75h3M94.1 124.75h3M100.1 124.75h3M106.1 124.75h3" stroke="#7458c4" stroke-dasharray="1 2"/></g></svg>
<div style="left:1182px;top:58px;width:109px;height:4px;background:rgba(205,70,68,.5);"></div>
<div style="left:1180px;top:58px;width:2.2px;height:2px;background:#ee4436;"></div>
<div style="left:1183px;top:60px;width:2.2px;height:2px;background:#ee4436;"></div>
<div style="left:1292px;top:59.5px;width:6px;height:14.5px;background:rgba(255,255,255,.17);"></div>
<div style="left:1292px;top:74px;width:6px;height:322.5px;background:rgba(255,255,255,.115);"></div>
<div style="left:1296.8px;top:70px;width:1.2px;height:10px;background:#c2484c;"></div>
<div style="left:1292px;top:396.5px;width:0.8px;height:310.5px;background:#313335;"></div>
<div style="left:1336px;top:86.4px;width:30px;height:0.8px;background:#343637;"></div>
<div style="left:1352.6px;top:77.2px;width:7.2px;height:690px;background:#222427;border-radius:3.6px;border:.6px solid #2f3134"></div>
<svg style="left:1324px;top:338.4px;" width="16" height="13.4" viewBox="0 0 17 14.5"><g stroke="#b4b4b2" fill="none" stroke-width="1.45"><path d="M2.6 5.8 C1.2 6.6 .9 7.8 .9 9.4 C2.4 12.2 5.4 13.6 8.5 13.6 C11.6 13.6 14.6 12.2 16.1 9.4 C16.1 7.8 15.8 6.6 14.4 5.8"/><rect x="2.5" y="1" width="5.5" height="6.2" rx="2.5"/><rect x="9" y="1" width="5.5" height="6.2" rx="2.5"/><path d="M6.3 9 V11.2 M10.7 9 V11.2" stroke-width="1.55"/></g></svg>
<span class="t fs" style="left:1305.60px;top:358.36px;font-size:10.4px;line-height:12.48px;color:#d2d2d0;transform:scaleX(1.037);">Ask Copilot</span>
<span class="t fs" style="left:1306.00px;top:379.14px;font-size:5.1px;line-height:6.12px;color:#cfcfcd;transform:scaleX(1.062);">使用 GitHub 登录以使</span>
<span class="t fs" style="left:1306.40px;top:386.54px;font-size:5.1px;line-height:6.12px;color:#cfcfcd;transform:scaleX(1.039);">用你的 AI 配对程序员</span>
<span class="t fs" style="left:1311.00px;top:393.94px;font-size:5.1px;line-height:6.12px;color:#cfcfcd;transform:scaleX(1.018);">GitHub Copilot。</span>
<div style="left:1306px;top:405.8px;width:52px;height:19.8px;background:#615d54;"></div>
<span class="t fs" style="left:1323.60px;top:408.54px;font-size:5.1px;line-height:6.12px;color:#eeeeec;transform:scaleX(1.072);">登录到</span>
<span class="t fs" style="left:1317.00px;top:416.14px;font-size:5.1px;line-height:6.12px;color:#eeeeec;transform:scaleX(1.169);">GitHub.com</span>
<span class="t fs" style="left:1306.00px;top:431.14px;font-size:5.1px;line-height:6.12px;color:#3f7fd0;transform:scaleX(1.059);">使用 GHE.com 帐户登</span>
<span class="t fs" style="left:1329.40px;top:438.34px;font-size:5.1px;line-height:6.12px;color:#3f7fd0;transform:scaleX(1.018);">录</span>
<span class="t fs" style="left:1306.00px;top:450.74px;font-size:5.1px;line-height:6.12px;color:#cfcfcd;transform:scaleX(1.046);">或浏览</span>
<span class="t fs" style="left:1323.00px;top:450.74px;font-size:5.1px;line-height:6.12px;color:#3f7fd0;transform:scaleX(1.137);">Copilot</span>
<span class="t fs" style="left:1341.60px;top:450.74px;font-size:5.1px;line-height:6.12px;color:#3f7fd0;transform:scaleX(1.019);">演练</span>
<span class="t fs" style="left:1352.40px;top:450.74px;font-size:5.1px;line-height:6.12px;color:#cfcfcd;transform:scaleX(1.018);">以</span>
<span class="t fs" style="left:1321.00px;top:458.34px;font-size:5.1px;line-height:6.12px;color:#cfcfcd;transform:scaleX(1.042);">了解更多!</span>
<div style="left:88px;top:708px;width:1210px;height:51px;background:#262727;"></div>
<svg style="left:4px;top:739.7px;" width="84" height="19.3" viewBox="0 0 84 19.3"><path d="M0 0 H72 L81.4 9.6 L72 19.3 H0 Z" fill="#4f5a3a"/></svg>
<span class="t fm" style="left:14.60px;top:739.70px;font-size:16px;line-height:19.20px;color:#1d2127;transform:scaleX(0.903);">INSERT</span>
<span class="t fm" style="left:1103.00px;top:739.70px;font-size:16px;line-height:19.20px;color:#4c4a68;transform:scaleX(0.779);">gi</span>
<svg style="left:1128px;top:739.7px;" width="124" height="19.3" viewBox="0 0 124 19.3"><path d="M11 0 H124 V19.3 H11 L1.4 9.6 Z" fill="#2d3137"/></svg>
<span class="t fm" style="left:1147.40px;top:739.70px;font-size:16px;line-height:19.20px;color:#606e3a;transform:scaleX(0.906);">Top</span>
<span class="t fm" style="left:1202.30px;top:739.70px;font-size:16px;line-height:19.20px;color:#606e3a;transform:scaleX(0.875);">1:1</span>
<svg style="left:1244px;top:739.7px;" width="92" height="19.3" viewBox="0 0 92 19.3"><path d="M10 0 H92 V19.3 H10 L2 9.6 Z" fill="#525d39"/></svg>
<svg style="left:1262px;top:742.6px;" width="14" height="14" viewBox="0 0 14 14"><circle cx="7" cy="7" r="5.4" stroke="#1d2127" stroke-width="1.3" fill="none"/><path d="M7 3.6 V7.2 H10" stroke="#1d2127" stroke-width="1.2" fill="none"/></svg>
<span class="t fm" style="left:1283.40px;top:739.70px;font-size:16px;line-height:19.20px;color:#1d2127;transform:scaleX(0.893);">02:03</span>
<svg style="left:3.2px;top:742.4px;" width="14" height="14" viewBox="0 0 14 14"><g stroke="#c9cbc4" stroke-width=".85" fill="none"><circle cx="6.6" cy="6.6" r="1.5"/><path d="M6.6 1.6 L7.8 2.9 L9.6 2.5 L10 4.3 L11.6 5.2 L10.9 6.6 L11.6 8 L10 8.9 L9.6 10.7 L7.8 10.3 L6.6 11.6 L5.4 10.3 L3.6 10.7 L3.2 8.9 L1.6 8 L2.3 6.6 L1.6 5.2 L3.2 4.3 L3.6 2.5 L5.4 2.9 Z"/></g></svg>
<div style="left:88px;top:707px;width:1210px;height:1px;background:#3d3f3d;"></div>
<span class="t fs" style="left:96.00px;top:712.18px;font-size:4.7px;line-height:5.64px;color:#646664;transform:scaleX(0.895);">问题</span>
<div style="left:106px;top:711.8px;width:6.2px;height:6.2px;background:#2a7bd0;border-radius:50%"></div>
<span class="t fs" style="left:108.00px;top:712.48px;font-size:4.2px;line-height:5.04px;color:#fff;transform:scaleX(1.146);">2</span>
<span class="t fs" style="left:121.00px;top:712.18px;font-size:4.7px;line-height:5.64px;color:#646664;transform:scaleX(0.958);">输出</span>
<span class="t fs" style="left:140.00px;top:712.18px;font-size:4.7px;line-height:5.64px;color:#646664;transform:scaleX(0.912);">调试控制台</span>
<span class="t fs" style="left:171.00px;top:712.18px;font-size:4.7px;line-height:5.64px;color:#e6e6e4;transform:scaleX(1.065);">终端</span>
<div style="left:171px;top:718.2px;width:10px;height:0.9px;background:#cfc6a8;"></div>
<span class="t fs" style="left:190.00px;top:712.18px;font-size:4.7px;line-height:5.64px;color:#646664;transform:scaleX(0.895);">端口</span>
<span class="t fs" style="left:208.00px;top:712.18px;font-size:4.7px;line-height:5.64px;color:#646664;transform:scaleX(0.980);">评论</span>
<svg style="left:96px;top:720.8px;clip-path:inset(0 0 0 0)" width="182" height="38.2" viewBox="0 0 182 38.2"><path d="M0 0.0 H75 L77.3 4.0 L75 8.0 H0 Z" fill="#2a2c31"/><path d="M75 0.0 L77.3 4.0 L75 8.0 H144.2 L146.3 4.0 L144.2 0.0 Z" fill="#5f6fb2"/><path d="M144.2 0.0 L146.3 4.0 L144.2 8.0 H177.2 L179.3 4.0 L177.2 0.0 Z" fill="#6e9628"/><path d="M150.4 1.0 V7.4" stroke="#2b3a14" stroke-width=".7" stroke-dasharray="1.6 .7"/><path d="M0 8.0 H75 L77.3 12.0 L75 16.0 H0 Z" fill="#2a2c31"/><path d="M75 8.0 L77.3 12.0 L75 16.0 H144.2 L146.3 12.0 L144.2 8.0 Z" fill="#5f6fb2"/><path d="M144.2 8.0 L146.3 12.0 L144.2 16.0 H177.2 L179.3 12.0 L177.2 8.0 Z" fill="#6e9628"/><path d="M150.4 9.0 V15.4" stroke="#2b3a14" stroke-width=".7" stroke-dasharray="1.6 .7"/><path d="M0 16.0 H75 L77.3 20.0 L75 24.0 H0 Z" fill="#2a2c31"/><path d="M75 16.0 L77.3 20.0 L75 24.0 H144.2 L146.3 20.0 L144.2 16.0 Z" fill="#5f6fb2"/><path d="M144.2 16.0 L146.3 20.0 L144.2 24.0 H177.2 L179.3 20.0 L177.2 16.0 Z" fill="#6e9628"/><path d="M150.4 17.0 V23.4" stroke="#2b3a14" stroke-width=".7" stroke-dasharray="1.6 .7"/><path d="M0 24.0 H75 L77.3 28.0 L75 32.0 H0 Z" fill="#2a2c31"/><path d="M75 24.0 L77.3 28.0 L75 32.0 H144.2 L146.3 28.0 L144.2 24.0 Z" fill="#5f6fb2"/><path d="M144.2 24.0 L146.3 28.0 L144.2 32.0 H177.2 L179.3 28.0 L177.2 24.0 Z" fill="#6e9628"/><path d="M150.4 25.0 V31.4" stroke="#2b3a14" stroke-width=".7" stroke-dasharray="1.6 .7"/><path d="M0 32.0 H75 L77.3 36.0 L75 40.0 H0 Z" fill="#2a2c31"/><path d="M75 32.0 L77.3 36.0 L75 40.0 H144.2 L146.3 36.0 L144.2 32.0 Z" fill="#5f6fb2"/><path d="M144.2 32.0 L146.3 36.0 L144.2 40.0 H177.2 L179.3 36.0 L177.2 32.0 Z" fill="#6e9628"/><path d="M150.4 33.0 V39.4" stroke="#2b3a14" stroke-width=".7" stroke-dasharray="1.6 .7"/></svg>
<span class="t fm" style="left:99.30px;top:720.30px;font-size:5px;line-height:6.00px;color:#a8a334;transform:scaleX(0.996);">chiyoyuki@ChiyoYukiArch</span>
<span class="t fm" style="left:176.60px;top:720.30px;font-size:5px;line-height:6.00px;color:#1e2340;transform:scaleX(1.003);-webkit-text-stroke:.12px #1e2340;">~/codes/xcpc/cf/2072</span>
<span class="t fm" style="left:252.00px;top:720.30px;font-size:5px;line-height:6.00px;color:#3a4c18;transform:scaleX(0.996);">main</span>
<span class="t fm" style="left:267.40px;top:720.30px;font-size:5px;line-height:6.00px;color:#3a4c18;transform:scaleX(0.928);">?</span>
<span class="t fm" style="left:99.30px;top:728.30px;font-size:5px;line-height:6.00px;color:#a8a334;transform:scaleX(0.996);">chiyoyuki@ChiyoYukiArch</span>
<span class="t fm" style="left:176.60px;top:728.30px;font-size:5px;line-height:6.00px;color:#1e2340;transform:scaleX(1.003);-webkit-text-stroke:.12px #1e2340;">~/codes/xcpc/cf/2072</span>
<span class="t fm" style="left:252.00px;top:728.30px;font-size:5px;line-height:6.00px;color:#3a4c18;transform:scaleX(0.996);">main</span>
<span class="t fm" style="left:267.40px;top:728.30px;font-size:5px;line-height:6.00px;color:#3a4c18;transform:scaleX(0.928);">?</span>
<span class="t fm" style="left:99.30px;top:736.30px;font-size:5px;line-height:6.00px;color:#a8a334;transform:scaleX(0.996);">chiyoyuki@ChiyoYukiArch</span>
<span class="t fm" style="left:176.60px;top:736.30px;font-size:5px;line-height:6.00px;color:#1e2340;transform:scaleX(1.003);-webkit-text-stroke:.12px #1e2340;">~/codes/xcpc/cf/2072</span>
<span class="t fm" style="left:252.00px;top:736.30px;font-size:5px;line-height:6.00px;color:#3a4c18;transform:scaleX(0.996);">main</span>
<span class="t fm" style="left:267.40px;top:736.30px;font-size:5px;line-height:6.00px;color:#3a4c18;transform:scaleX(0.928);">?</span>
<span class="t fm" style="left:99.30px;top:744.30px;font-size:5px;line-height:6.00px;color:#a8a334;transform:scaleX(0.996);">chiyoyuki@ChiyoYukiArch</span>
<span class="t fm" style="left:176.60px;top:744.30px;font-size:5px;line-height:6.00px;color:#1e2340;transform:scaleX(1.003);-webkit-text-stroke:.12px #1e2340;">~/codes/xcpc/cf/2072</span>
<span class="t fm" style="left:252.00px;top:744.30px;font-size:5px;line-height:6.00px;color:#3a4c18;transform:scaleX(0.996);">main</span>
<span class="t fm" style="left:267.40px;top:744.30px;font-size:5px;line-height:6.00px;color:#3a4c18;transform:scaleX(0.928);">?</span>
<span class="t fm" style="left:99.30px;top:752.30px;font-size:5px;line-height:6.00px;color:#a8a334;transform:scaleX(0.996);">chiyoyuki@ChiyoYukiArch</span>
<span class="t fm" style="left:176.60px;top:752.30px;font-size:5px;line-height:6.00px;color:#1e2340;transform:scaleX(1.003);-webkit-text-stroke:.12px #1e2340;">~/codes/xcpc/cf/2072</span>
<span class="t fm" style="left:252.00px;top:752.30px;font-size:5px;line-height:6.00px;color:#3a4c18;transform:scaleX(0.996);">main</span>
<span class="t fm" style="left:267.40px;top:752.30px;font-size:5px;line-height:6.00px;color:#3a4c18;transform:scaleX(0.928);">?</span>
<div style="left:88px;top:759px;width:1210px;height:9px;background:#494b46;"></div>
<div style="left:539px;top:759px;width:60px;height:9px;background:#3a4342;"></div>
<svg style="left:539px;top:759px;" width="60" height="9" viewBox="0 0 60 9"><path d="M18 0 L24 9 M30 0 V9 M41 0 L35 9" stroke="#484a45" stroke-width="1.6" fill="none"/></svg>
<div style="left:637.4px;top:759px;width:3px;height:9px;background:#454742;"></div>
<div style="left:680px;top:759px;width:8px;height:9px;background:#373934;"></div>
<div style="left:703px;top:759px;width:8px;height:9px;background:#373934;"></div>
<div style="left:700px;top:759px;width:140px;height:9px;overflow:hidden"><span class="t fn" style="left:24.4px;top:-9.4px;font-size:60px;line-height:60px;font-weight:700;color:#373934;letter-spacing:-1.5px">MO</span></div>
<svg style="left:89.6px;top:753px;" width="4" height="4" viewBox="0 0 4 4"><circle cx="2" cy="2" r="1.3" stroke="#55575a" stroke-width=".5" fill="none"/></svg>
<span class="t fm" style="left:1065.00px;top:752.04px;font-size:4.6px;line-height:5.52px;color:#6f9a2a;transform:scaleX(1.079);">✓</span>
<svg style="left:1071px;top:750.8px;" width="56" height="8" viewBox="0 0 56 8"><path d="M2.6 0 H24 V8 H2.6 L.4 4 Z" fill="#7a7c80"/><path d="M22.4 0 H55 V8 H22.4 L20.2 4 Z" fill="#c9c9c7"/></svg>
<span class="t fm" style="left:1076.60px;top:752.02px;font-size:4.8px;line-height:5.76px;color:#2a2c30;transform:scaleX(1.038);">4025</span>
<span class="t fm" style="left:1097.00px;top:752.02px;font-size:4.8px;line-height:5.76px;color:#2a2c30;transform:scaleX(1.065);">01:58:43</span>
<div style="left:1244.6px;top:720.8px;width:0.7px;height:38.2px;background:#3c3e3c;"></div>
<div style="left:1250px;top:720.8px;width:0.7px;height:38.2px;background:#3c3e3c;"></div>
<div style="left:1251px;top:739.4px;width:46px;height:7.6px;background:rgba(255,255,255,.13);"></div>
<svg style="left:1252px;top:711px;" width="40" height="7" viewBox="0 0 40 7"><g stroke="#c4c4c0" stroke-width=".7" fill="none"><path d="M-1.4 3.6 H3.6 M1.1 1 V6.2"/><path d="M6 3.2 L7.2 4.4 L8.4 3.2" stroke="#7a7c7a"/><path d="M13.4 3.6 H18.6" stroke="#7a7c7a"/><path d="M24 4.4 L26 2.4 L28 4.4" stroke="#9a9c9a"/><path d="M34.6 1.8 L37.8 5.2 M37.8 1.8 L34.6 5.2"/></g></svg>
<svg style="left:1254.2px;top:722.6px;" width="6" height="6" viewBox="0 0 6 6"><rect x=".6" y=".8" width="4.8" height="4.4" rx=".5" stroke="#c4c4c0" stroke-width=".6" fill="none"/><path d="M1.8 2.2 L2.8 3 L1.8 3.8" stroke="#c4c4c0" stroke-width=".5" fill="none"/></svg>
<span class="t fs" style="left:1262.00px;top:722.48px;font-size:5.2px;line-height:6.24px;color:#c4c4c0;transform:scaleX(1.705);">zsh</span>
<svg style="left:1254.2px;top:731.4px;" width="6" height="6" viewBox="0 0 6 6"><rect x=".6" y=".8" width="4.8" height="4.4" rx=".5" stroke="#c4c4c0" stroke-width=".6" fill="none"/><path d="M1.8 2.2 L2.8 3 L1.8 3.8" stroke="#c4c4c0" stroke-width=".5" fill="none"/></svg>
<span class="t fs" style="left:1262.00px;top:731.28px;font-size:5.2px;line-height:6.24px;color:#c4c4c0;transform:scaleX(1.027);">C/C++: ...</span>
<svg style="left:1289px;top:732px;" width="6" height="5" viewBox="0 0 6 5"><path d="M.8 2.8 L2.2 4.2 L5 1" stroke="#a9aba6" stroke-width=".6" fill="none"/></svg>
<svg style="left:1254.2px;top:740px;" width="6" height="6" viewBox="0 0 6 6"><circle cx="3" cy="3.2" r="1.9" stroke="#c4c4c0" stroke-width=".6" fill="none"/><path d="M3 .6 V5.8 M.6 3.2 H5.4" stroke="#c4c4c0" stroke-width=".5"/></svg>
<span class="t fs" style="left:1262.00px;top:740.08px;font-size:5.2px;line-height:6.24px;color:#e4e4e0;transform:scaleX(1.026);">cppdbg: F...</span>
<div style="left:1298px;top:759px;width:68px;height:9px;background:#494b46;"></div>
<div style="left:0px;top:759px;width:14px;height:9px;background:#a2692c;"></div>
<svg style="left:3px;top:760px;" width="8" height="7" viewBox="0 0 8 7"><path d="M1.4 5.6 L3.4 3.6 L1.4 1.6 M6.6 1.4 L4.6 3.4 L6.6 5.4" stroke="#e8d8c0" stroke-width=".7" fill="none"/></svg>
<svg style="left:15.6px;top:760px;" width="6" height="7" viewBox="0 0 6 7"><g stroke="#cfcfcb" stroke-width=".6" fill="none"><circle cx="1.6" cy="1.4" r=".8"/><circle cx="4.4" cy="2.4" r=".8"/><path d="M1.6 2.2 V6.4 M4.4 3.2 C4.4 4.4 1.6 4 1.6 5.2"/></g></svg>
<span class="t fs" style="left:22.60px;top:760.10px;font-size:5.5px;line-height:6.60px;color:#cfcfcb;transform:scaleX(1.047);">main*</span>
<svg style="left:39.6px;top:760.6px;" width="7" height="6" viewBox="0 0 7 6"><path d="M1 3 A2.4 2.4 0 0 1 5.6 2.2 M6 3 A2.4 2.4 0 0 1 1.4 3.8" stroke="#cfcfcb" stroke-width=".6" fill="none"/></svg>
<svg style="left:50.6px;top:760.6px;" width="6" height="6" viewBox="0 0 6 6"><path d="M1.2 1 L5 3 L1.2 5 Z" stroke="#cfcfcb" stroke-width=".6" fill="none"/></svg>
<span class="t fs" style="left:58.60px;top:760.10px;font-size:5.5px;line-height:6.60px;color:#cfcfcb;transform:scaleX(1.040);">Run Testcases</span>
<svg style="left:97px;top:760.4px;" width="7" height="6.4" viewBox="0 0 7 6.4"><circle cx="3.2" cy="3.2" r="2.5" stroke="#cfcfcb" stroke-width=".6" fill="none"/><path d="M2.2 2.2 L4.2 4.2 M4.2 2.2 L2.2 4.2" stroke="#cfcfcb" stroke-width=".5"/></svg>
<span class="t fs" style="left:104.20px;top:760.10px;font-size:5.5px;line-height:6.60px;color:#cfcfcb;transform:scaleX(1.018);">2</span>
<svg style="left:108.4px;top:760.4px;" width="7" height="6.4" viewBox="0 0 7 6.4"><path d="M3.4 .9 L6.2 5.6 H.6 Z" stroke="#cfcfcb" stroke-width=".6" fill="none"/></svg>
<span class="t fs" style="left:115.60px;top:760.10px;font-size:5.5px;line-height:6.60px;color:#cfcfcb;transform:scaleX(1.018);">0</span>
<svg style="left:124.6px;top:760.4px;" width="7" height="6.4" viewBox="0 0 7 6.4"><path d="M1 4.4 L3 1.4 L5.8 2.8 L4.4 5.4 Z M1.6 5.6 H4" stroke="#cfcfcb" stroke-width=".6" fill="none"/></svg>
<div style="left:1169px;top:759px;width:14.4px;height:9px;background:#2f3130;"></div>
<svg style="left:1172.6px;top:760.2px;" width="7" height="7" viewBox="0 0 7 7"><circle cx="2.8" cy="2.8" r="1.9" stroke="#cfcfcb" stroke-width=".6" fill="none"/><path d="M4.2 4.2 L6.2 6.2" stroke="#cfcfcb" stroke-width=".6"/></svg>
<span class="t fs" style="left:1186.00px;top:760.10px;font-size:5.5px;line-height:6.60px;color:#cfcfcb;transform:scaleX(0.985);">行 66, 列 1</span>
<span class="t fs" style="left:1217.00px;top:760.10px;font-size:5.5px;line-height:6.60px;color:#cfcfcb;transform:scaleX(0.925);">空格: 4</span>
<span class="t fs" style="left:1238.40px;top:760.10px;font-size:5.5px;line-height:6.60px;color:#cfcfcb;transform:scaleX(0.948);">UTF-8</span>
<span class="t fs" style="left:1258.00px;top:760.10px;font-size:5.5px;line-height:6.60px;color:#cfcfcb;transform:scaleX(0.997);">LF</span>
<span class="t fs" style="left:1270.00px;top:760.40px;font-size:5px;line-height:6.00px;color:#cfcfcb;transform:scaleX(0.956);">{}</span>
<span class="t fs" style="left:1278.00px;top:760.10px;font-size:5.5px;line-height:6.60px;color:#cfcfcb;transform:scaleX(0.851);">C++</span>
<svg style="left:1291.4px;top:760.2px;" width="7" height="7" viewBox="0 0 7 7"><g stroke="#cfcfcb" stroke-width=".6" fill="none"><circle cx="3.2" cy="3" r="1"/><path d="M1.4 4.8 A2.6 2.6 0 1 1 5 4.8"/></g></svg>
<span class="t fs" style="left:1298.60px;top:760.10px;font-size:5.5px;line-height:6.60px;color:#cfcfcb;transform:scaleX(0.957);">Go Live</span>
<svg style="left:1321.8px;top:760.6px;" width="7" height="5.4" viewBox="0 0 9 6.6"><path d="M4.4 .6 C2.4 .6 1.6 1.2 1.6 2.4 C.8 3 .6 3.8 .6 4.6 C1.4 5.8 2.8 6.2 4.4 6.2 C6 6.2 7.4 5.8 8.2 4.6 C8.2 3.8 8 3 7.2 2.4 C7.2 1.2 6.4 .6 4.4 .6 Z" stroke="#cfcfcb" stroke-width=".7" fill="none"/><path d="M3.2 3.8 V5 M5.6 3.8 V5" stroke="#cfcfcb" stroke-width=".7"/></svg>
<span class="t fs" style="left:1334.60px;top:760.10px;font-size:5.5px;line-height:6.60px;color:#cfcfcb;transform:scaleX(1.141);">Linux</span>
<svg style="left:1354.6px;top:760.2px;" width="8" height="7" viewBox="0 0 8 7"><path d="M1.4 5 H6 M2.2 5 V2.8 A1.6 1.6 0 0 1 5.2 2.8 V5 M3.2 6 H4.2" stroke="#cfcfcb" stroke-width=".6" fill="none"/><circle cx="6" cy="1.6" r=".9" fill="#cfcfcb"/></svg>
</body></html>
